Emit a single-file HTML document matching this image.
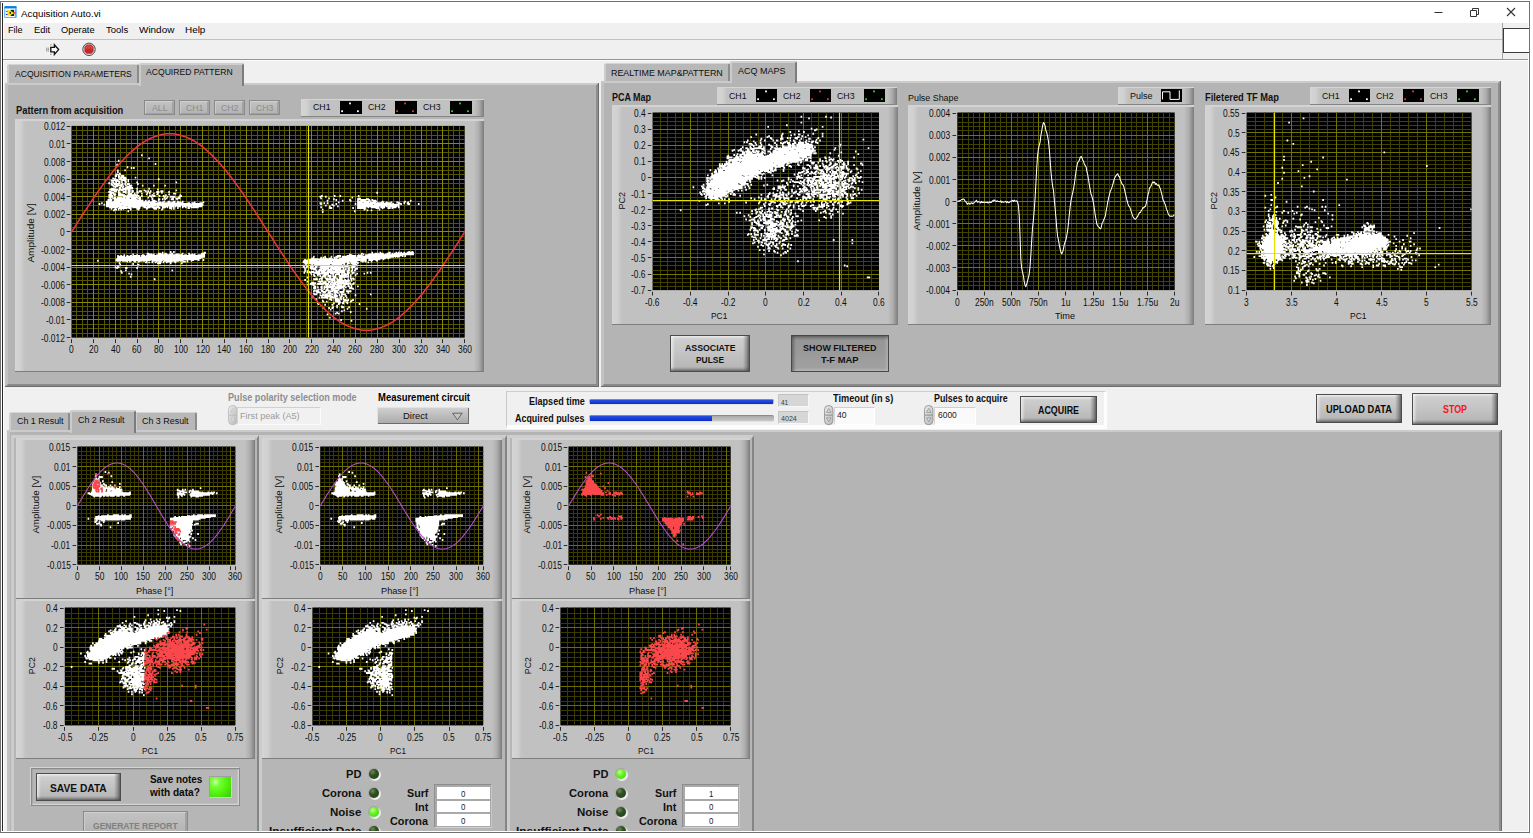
<!DOCTYPE html><html><head><meta charset="utf-8"><title>Acquisition Auto.vi</title><style>
html,body{margin:0;padding:0;background:#fff;}
body{width:1533px;height:838px;position:relative;overflow:hidden;font-family:"Liberation Sans",sans-serif;}
.a{position:absolute;box-sizing:border-box;}
.t{position:absolute;white-space:nowrap;line-height:1;transform-origin:0 50%;display:block;}
svg{position:absolute;overflow:visible;}
.page{background:#b4b4b4;}
.page::before{content:"";position:absolute;left:0;top:0;right:0;bottom:0;border-style:solid;border-width:2px 3px 3px 3px;border-color:#cbcbcb #8e8e8e #8a8a8a #c2c2c2;}
.page::after{content:"";position:absolute;left:0;top:0;right:0;bottom:0;border-right:1px solid #6c6c6c;border-bottom:1px solid #6c6c6c;}
.tab{background:#b8b8b8;border-top:1px solid #d4d4d4;border-left:2px solid #cdcdcd;border-right:2px solid #8c8c8c;border-radius:2px 2px 0 0;}
.tabsel{background:#b4b4b4;border-top:2px solid #cecece;border-left:2px solid #cbcbcb;border-right:2px solid #7c7c7c;border-radius:2px 2px 0 0;}
.frame{background:linear-gradient(90deg,#d5d5d5 0,#d0d0d0 6px,#c4c4c4 9px,#c1c1c1 11px,#c1c1c1 calc(100% - 10px),#adadad calc(100% - 5px),#7c7c7c 100%);border-top:2px solid #d3d3d3;border-bottom:1px solid #7e7e7e;}
.btn{border:1px solid #4c4c4c;background:linear-gradient(to left,rgba(70,70,70,.78) 0,rgba(80,80,80,.42) 2.5px,rgba(90,90,90,0) 6px),linear-gradient(to top,rgba(70,70,70,.72) 0,rgba(80,80,80,.3) 2px,rgba(90,90,90,0) 4px),linear-gradient(to right,rgba(255,255,255,.62) 0,rgba(255,255,255,.3) 2px,rgba(255,255,255,0) 4px),linear-gradient(to bottom,rgba(255,255,255,.6) 0,rgba(255,255,255,0) 3px),linear-gradient(180deg,#d0d0d0 0,#c5c5c5 45%,#b3b3b3 100%);}
.btnd{border:1px solid #484848;background:linear-gradient(to bottom,rgba(60,60,60,.6) 0,rgba(70,70,70,.25) 2px,rgba(80,80,80,0) 4.5px),linear-gradient(to right,rgba(60,60,60,.5) 0,rgba(80,80,80,0) 4px),linear-gradient(to left,rgba(190,190,190,.5) 0,rgba(190,190,190,0) 4px),linear-gradient(to top,rgba(200,200,200,.55) 0,rgba(200,200,200,0) 3px),linear-gradient(180deg,#949494 0,#9a9a9a 50%,#a2a2a2 100%);}
.btndis{background:linear-gradient(180deg,#c3c3c3,#b3b3b3);border:1px solid #8a8a8a;}
.btndis::before{content:"";position:absolute;left:0;top:0;right:0;bottom:0;border-style:solid;border-width:1px 2px 1.5px 1.5px;border-color:#d0d0d0 #a2a2a2 #a0a0a0 #cccccc;}
.num{background:#fff;border-top:2px solid #8e8e8e;border-left:2px solid #9a9a9a;border-right:1px solid #dcdcdc;border-bottom:1px solid #dcdcdc;}
</style></head><body>
<div class="a" style="left:0px;top:0.9px;width:1530px;height:832.1px;background:#f0f0f0;border:1px solid #727272;border-left-width:0.8px;box-shadow:inset 0 0 0 1px #fff;"></div>
<div class="a" style="left:0.8px;top:1.9px;width:1528.2px;height:21.2px;background:#fff;"></div>
<div class="a" style="left:2px;top:2.9px;width:1.1px;height:829px;background:#2a2626;"></div>
<div class="a" style="left:3.1px;top:23px;width:0.9px;height:808px;background:#fff;"></div>
<svg class="a" style="left:0px;top:0px" width="24" height="22" viewBox="0 0 24 22"><rect x="4.15" y="5.9" width="12.65" height="12.15" rx="1.2" fill="#5cb4f8"/><rect x="4.6" y="6.2" width="11.8" height="1.9" rx="0.6" fill="#0c7ae0"/><rect x="5.2" y="8.7" width="9.8" height="8.2" fill="#fff"/><rect x="10.6" y="9.8" width="3.6" height="6.2" fill="#0c2c08"/><path d="M7.4 9.1V16.8L14.4 12.95Z" fill="#ffe212"/><rect x="5.8" y="10.9" width="1.8" height="1.1" fill="#f02222"/><rect x="5.8" y="13.9" width="1.8" height="1.1" fill="#2424f0"/><rect x="14" y="12.1" width="1.6" height="1.6" fill="#e0385a"/><ellipse cx="10.3" cy="12.85" rx="0.85" ry="1.05" fill="#222"/></svg>
<span class="t" style="left:21.3px;top:9px;font-size:9.7px;color:#000;transform:scaleX(1.014);">Acquisition Auto.vi</span>
<svg class="a" style="left:1420px;top:2px" width="110" height="20" viewBox="0 0 110 20"><path d="M14.5 10.5h8" stroke="#333" stroke-width="1"/><path d="M50.5 8.5h6v6h-6zM52.5 8.5v-2h6v6h-2" stroke="#333" stroke-width="1" fill="none"/><path d="M87 6l8 8M95 6l-8 8" stroke="#333" stroke-width="1.1"/></svg>
<span class="t" style="left:8.3px;top:25px;font-size:9.7px;color:#000;transform:scaleX(0.940);">File</span>
<span class="t" style="left:33.8px;top:25px;font-size:9.7px;color:#000;transform:scaleX(0.969);">Edit</span>
<span class="t" style="left:61px;top:25px;font-size:9.7px;color:#000;transform:scaleX(0.959);">Operate</span>
<span class="t" style="left:105.8px;top:25px;font-size:9.7px;color:#000;transform:scaleX(0.980);">Tools</span>
<span class="t" style="left:138.8px;top:25px;font-size:9.7px;color:#000;transform:scaleX(1.026);">Window</span>
<span class="t" style="left:185px;top:25px;font-size:9.7px;color:#000;transform:scaleX(1.023);">Help</span>
<div class="a" style="left:3px;top:39.2px;width:1500px;height:1px;background:#c2c2c2;"></div>
<div class="a" style="left:3px;top:59px;width:1525px;height:1.1px;background:#969696;"></div>
<div class="a" style="left:3px;top:60.1px;width:1525px;height:1px;background:#fbfbfb;"></div>
<svg class="a" style="left:40px;top:40px" width="24" height="20" viewBox="40 40 24 20"><path d="M50.8 47.4h3.6v-2.7l4.2 4.9l-4.2 4.9v-2.7h-3.6z" fill="#fff" stroke="#111" stroke-width="1.35" stroke-linejoin="miter"/><path d="M46.3 48.2h3M46.3 49.6h3M46.3 51h3M50.4 44.9h1.6M50.4 54.3h1.6" stroke="#444" stroke-width="0.8" stroke-dasharray="0.9 0.6"/></svg>
<svg class="a" style="left:81px;top:41px" width="16" height="16" viewBox="0 0 16 16"><circle cx="8" cy="8.3" r="6.2" fill="#e4e4e4" stroke="#333" stroke-width="0.9"/><path d="M5.7 3.6h4.6l2.3 2.3v4.6l-2.3 2.3H5.7L3.4 10.5V5.9z" fill="#c62828"/><path d="M5.9 4.4h4.2l1.7 1.7v1.6H4.2V6.1z" fill="#d85a5a" opacity=".55"/></svg>
<div class="a" style="left:1501.6px;top:23px;width:26.4px;height:36px;background:#f0f0f0;border-left:1px solid #a4a4a4;"></div>
<div class="a" style="left:1503.2px;top:28px;width:25.8px;height:25.4px;background:#fff;border:1px solid #3c3c3c;border-right:none;"></div>
<div class="a page" style="left:5px;top:83px;width:594px;height:304px;"></div>
<div class="a tab" style="left:7px;top:63.8px;width:131.5px;height:19.2px;"></div>
<span class="t" style="left:14.7px;top:69px;font-size:9.7px;color:#0e0e0e;transform:scaleX(0.887);">ACQUISITION PARAMETERS</span>
<div class="a tabsel" style="left:138.5px;top:63px;width:105px;height:22.5px;"></div>
<span class="t" style="left:146.2px;top:67px;font-size:9.7px;color:#0e0e0e;transform:scaleX(0.888);">ACQUIRED PATTERN</span>
<span class="t" style="left:15.6px;top:106px;font-size:10px;color:#111;font-weight:bold;transform:scaleX(0.933);">Pattern from acquisition</span>
<div class="a btndis" style="left:144.2px;top:100.1px;width:30.6px;height:15px;"></div>
<span class="t" style="left:151.7px;top:103px;font-size:9.6px;color:#8c8c8c;transform:scaleX(0.913);">ALL</span>
<div class="a btndis" style="left:179px;top:100.1px;width:30.6px;height:15px;"></div>
<span class="t" style="left:185.55px;top:103px;font-size:9.6px;color:#8c8c8c;transform:scaleX(0.911);">CH1</span>
<div class="a btndis" style="left:214.2px;top:100.1px;width:30.6px;height:15px;"></div>
<span class="t" style="left:220.75px;top:103px;font-size:9.6px;color:#8c8c8c;transform:scaleX(0.911);">CH2</span>
<div class="a btndis" style="left:249.2px;top:100.1px;width:30.6px;height:15px;"></div>
<span class="t" style="left:255.75px;top:103px;font-size:9.6px;color:#8c8c8c;transform:scaleX(0.911);">CH3</span>
<div class="a frame" style="left:301px;top:98.5px;width:182.5px;height:18.3px;border-top:1px solid #d6d6d6;border-bottom:1px solid #858585;"></div>
<span class="t" style="left:313px;top:102px;font-size:9.7px;color:#0e0e0e;transform:scaleX(0.907);">CH1</span>
<div class="a" style="left:340px;top:100.6px;width:21.8px;height:13.4px;background:#000;"></div>
<svg class="a" style="left:340px;top:100.6px" width="22" height="14"><g fill="#fff"><rect x="9.1" y="1.5" width="1.8" height="1.8"/><rect x="1.2" y="9.3" width="1.8" height="1.8"/><rect x="17" y="9.3" width="1.8" height="1.8"/></g></svg>
<span class="t" style="left:368.15px;top:102px;font-size:9.7px;color:#0e0e0e;transform:scaleX(0.907);">CH2</span>
<div class="a" style="left:395.15px;top:100.6px;width:21.8px;height:13.4px;background:#000;"></div>
<svg class="a" style="left:395.15px;top:100.6px" width="22" height="14"><g fill="#e8363c"><rect x="9.1" y="1.5" width="1.8" height="1.8"/><rect x="1.2" y="9.3" width="1.8" height="1.8"/><rect x="17" y="9.3" width="1.8" height="1.8"/></g></svg>
<span class="t" style="left:423.3px;top:102px;font-size:9.7px;color:#0e0e0e;transform:scaleX(0.907);">CH3</span>
<div class="a" style="left:450.3px;top:100.6px;width:21.8px;height:13.4px;background:#000;"></div>
<svg class="a" style="left:450.3px;top:100.6px" width="22" height="14"><g fill="#22dc22"><rect x="9.1" y="1.5" width="1.8" height="1.8"/><rect x="1.2" y="9.3" width="1.8" height="1.8"/><rect x="17" y="9.3" width="1.8" height="1.8"/></g></svg>
<div class="a frame" style="left:15.4px;top:118.6px;width:468.4px;height:253px;"></div>
<svg class="a" style="left:63px;top:118px" width="410" height="228" viewBox="-8 -8 410 228"><rect x="0.5" y="-0.1" width="393.2" height="211.7" fill="#000"/><path d="M5.5 -0.1V211.6M11.5 -0.1V211.6M16.5 -0.1V211.6M27.5 -0.1V211.6M33.5 -0.1V211.6M38.5 -0.1V211.6M49.5 -0.1V211.6M55.5 -0.1V211.6M60.5 -0.1V211.6M71.5 -0.1V211.6M76.5 -0.1V211.6M82.5 -0.1V211.6M93.5 -0.1V211.6M98.5 -0.1V211.6M104.5 -0.1V211.6M115.5 -0.1V211.6M120.5 -0.1V211.6M126.5 -0.1V211.6M137.5 -0.1V211.6M142.5 -0.1V211.6M147.5 -0.1V211.6M158.5 -0.1V211.6M164.5 -0.1V211.6M169.5 -0.1V211.6M180.5 -0.1V211.6M186.5 -0.1V211.6M191.5 -0.1V211.6M202.5 -0.1V211.6M208.5 -0.1V211.6M213.5 -0.1V211.6M224.5 -0.1V211.6M229.5 -0.1V211.6M235.5 -0.1V211.6M246.5 -0.1V211.6M251.5 -0.1V211.6M257.5 -0.1V211.6M268.5 -0.1V211.6M273.5 -0.1V211.6M279.5 -0.1V211.6M289.5 -0.1V211.6M295.5 -0.1V211.6M300.5 -0.1V211.6M311.5 -0.1V211.6M317.5 -0.1V211.6M322.5 -0.1V211.6M333.5 -0.1V211.6M339.5 -0.1V211.6M344.5 -0.1V211.6M355.5 -0.1V211.6M360.5 -0.1V211.6M366.5 -0.1V211.6M377.5 -0.1V211.6M382.5 -0.1V211.6M388.5 -0.1V211.6M0.5 207.5H393.7M0.5 202.5H393.7M0.5 198.5H393.7M0.5 189.5H393.7M0.5 185.5H393.7M0.5 180.5H393.7M0.5 172.5H393.7M0.5 167.5H393.7M0.5 163.5H393.7M0.5 154.5H393.7M0.5 150.5H393.7M0.5 145.5H393.7M0.5 136.5H393.7M0.5 132.5H393.7M0.5 127.5H393.7M0.5 119.5H393.7M0.5 114.5H393.7M0.5 110.5H393.7M0.5 101.5H393.7M0.5 97.5H393.7M0.5 92.5H393.7M0.5 84.5H393.7M0.5 79.5H393.7M0.5 75.5H393.7M0.5 66.5H393.7M0.5 62.5H393.7M0.5 57.5H393.7M0.5 48.5H393.7M0.5 44.5H393.7M0.5 40.5H393.7M0.5 31.5H393.7M0.5 26.5H393.7M0.5 22.5H393.7M0.5 13.5H393.7M0.5 9.5H393.7M0.5 4.5H393.7" stroke="#565600" stroke-width="1" fill="none"/><path d="M22.5 -0.1V211.6M44.5 -0.1V211.6M66.5 -0.1V211.6M87.5 -0.1V211.6M109.5 -0.1V211.6M131.5 -0.1V211.6M153.5 -0.1V211.6M175.5 -0.1V211.6M197.5 -0.1V211.6M218.5 -0.1V211.6M240.5 -0.1V211.6M262.5 -0.1V211.6M284.5 -0.1V211.6M306.5 -0.1V211.6M328.5 -0.1V211.6M350.5 -0.1V211.6M371.5 -0.1V211.6M0.5 193.5H393.7M0.5 176.5H393.7M0.5 158.5H393.7M0.5 141.5H393.7M0.5 123.5H393.7M0.5 105.5H393.7M0.5 88.5H393.7M0.5 70.5H393.7M0.5 53.5H393.7M0.5 35.5H393.7M0.5 17.5H393.7" stroke="#8a8a00" stroke-width="1" fill="none"/><svg x="0.5" y="0.4" width="393.2" height="211.2" style="overflow:hidden"><path transform="scale(0.8) translate(0 .5)" stroke="#fff" stroke-width="1.35" fill="none" d="M87 35h2M87 36h2M96 39h2M96 40h2M58 42h2M58 43h2M104 46h2M56 47h2m46 0h2M56 48h2M69 50h2M69 51h2m3 0h2m1 0h2M74 52h2m1 0h2M57 54h2m7 0h2M57 55h2m7 0h2M57 56h2M57 57h2M59 58h2M55 59h3m1 0h3M55 60h7M54 61h3m1 0h2m2 0h4M54 62h3m1 0h3m1 0h4M58 63h10m11 0h2M51 64h2m1 0h2m2 0h2m1 0h8m10 0h2M51 65h5m3 0h4m1 0h5m39 0h2M53 66h2m1 0h2m1 0h10m1 0h2m36 0h2M49 67h10m3 0h6m2 0h2M49 68h4m1 0h7m1 0h2m2 0h3m1 0h2M51 69h2m2 0h2m1 0h3m1 0h2m2 0h3m1 0h2m9 0h2m47 0h2M46 70h2m1 0h5m1 0h2m2 0h2m1 0h2m3 0h2m12 0h2m47 0h2M46 71h2m1 0h2m1 0h9m2 0h2m1 0h2m1 0h4m9 0h2M49 72h3m1 0h7m1 0h4m1 0h2m1 0h4m9 0h2M49 73h4m1 0h11m2 0h2m3 0h4m12 0h2m12 0h2m12 0h2M51 74h3m1 0h8m1 0h2m1 0h9m12 0h2m12 0h2m12 0h2M52 75h6m3 0h5m3 0h6M54 76h2m3 0h3m1 0h2m2 0h10M49 77h5m5 0h3m2 0h13m4 0h2m13 0h2M47 78h11m1 0h15m7 0h2m13 0h2m9 0h2M47 79h22m1 0h4m1 0h2m13 0h2m15 0h2m21 0h2M49 80h8m1 0h3m1 0h3m2 0h2m1 0h4m1 0h3m3 0h2m1 0h4m2 0h4m1 0h2m1 0h2m11 0h4m15 0h2M46 81h4m3 0h4m1 0h2m4 0h5m1 0h4m1 0h3m3 0h2m1 0h4m4 0h2m1 0h2m1 0h2m6 0h4m1 0h4m6 0h2M46 82h7m5 0h3m3 0h5m1 0h3m2 0h2m4 0h3m10 0h2m1 0h2m7 0h4m2 0h2m7 0h2m258 0h2M48 83h6m4 0h4m5 0h2m1 0h6m2 0h2m1 0h3m3 0h2m5 0h2m1 0h2m3 0h2m3 0h2m3 0h2m13 0h4m250 0h2M47 84h4m1 0h4m2 0h7m5 0h6m2 0h2m7 0h2m4 0h2m2 0h2m3 0h2m2 0h3m12 0h2m4 0h4M46 85h5m1 0h4m2 0h9m3 0h13m10 0h2m5 0h2m4 0h2m9 0h2m2 0h2m12 0h2M46 86h6m1 0h2m3 0h10m1 0h16m2 0h2m8 0h2m1 0h5m4 0h2m3 0h2m1 0h2m16 0h3m174 0h2m14 0h2m5 0h2m21 0h2M47 87h5m12 0h15m1 0h2m1 0h2m2 0h2m8 0h4m1 0h3m4 0h2m3 0h4m1 0h2m2 0h7m4 0h4m172 0h4m3 0h2m9 0h2m5 0h2m21 0h2M46 88h6m1 0h3m1 0h6m1 0h19m1 0h3m8 0h2m2 0h2m14 0h3m1 0h2m2 0h7m3 0h3m174 0h2m5 0h2m31 0h2M46 89h4m1 0h5m1 0h10m1 0h5m1 0h13m8 0h2m3 0h2m13 0h2m1 0h2m6 0h2m2 0h6m175 0h2m8 0h2m27 0h2m6 0h3M48 90h2m1 0h22m1 0h7m2 0h4m13 0h2m6 0h3m2 0h2m1 0h4m4 0h4m2 0h6m175 0h2m8 0h2m4 0h2m28 0h5m6 0h4M45 91h6m2 0h29m2 0h3m13 0h2m6 0h3m2 0h2m1 0h2m6 0h4m3 0h2m194 0h2m1 0h2m15 0h2m8 0h16m2 0h2M45 92h6m2 0h37m2 0h2m2 0h2m3 0h4m3 0h2m209 0h2m9 0h2m6 0h2m7 0h3m7 0h2m2 0h7m3 0h3m1 0h6m42 0h2M43 93h8m1 0h38m1 0h3m1 0h3m2 0h7m8 0h2m3 0h3m4 0h3m2 0h2m4 0h2m179 0h2m17 0h2m8 0h2m7 0h17m3 0h5m6 0h2m26 0h2m5 0h2M43 94h64m1 0h4m1 0h4m3 0h4m1 0h5m2 0h5m1 0h2m13 0h2m9 0h2m167 0h2m22 0h25m5 0h4m2 0h2m4 0h2m5 0h3m6 0h3m2 0h2M37 95h2m4 0h18m1 0h43m2 0h9m1 0h13m1 0h9m5 0h3m2 0h5m5 0h6m144 0h3m2 0h2m2 0h2m12 0h2m22 0h7m1 0h7m1 0h8m1 0h9m1 0h9m5 0h5m4 0h2m2 0h3M34 96h2m1 0h2m4 0h54m1 0h51m1 0h14m146 0h3m2 0h2m2 0h2m9 0h2m22 0h2m1 0h43m1 0h2m5 0h5m2 0h2m2 0h4m10 0h2M34 97h2m4 0h2m1 0h122m146 0h2m12 0h2m3 0h2m22 0h2m1 0h20m1 0h32m1 0h2m7 0h3m10 0h2M40 98h2m1 0h20m1 0h101m152 0h2m6 0h4m28 0h53M43 99h63m1 0h3m1 0h17m1 0h8m1 0h13m1 0h12m153 0h2m3 0h2m3 0h2m3 0h2m23 0h38m1 0h14M43 100h26m1 0h17m2 0h4m1 0h10m1 0h5m3 0h8m1 0h9m1 0h5m1 0h6m1 0h18m148 0h2m9 0h2m8 0h2m23 0h28m1 0h6m1 0h14m1 0h2M47 101h11m1 0h16m1 0h10m4 0h9m1 0h11m2 0h5m1 0h2m1 0h4m1 0h2m3 0h2m4 0h2m2 0h2m1 0h3m1 0h10m152 0h2m9 0h4m25 0h2m4 0h11m2 0h2m2 0h11m1 0h6m3 0h4m1 0h6m2 0h2M49 102h2m3 0h2m2 0h12m1 0h4m6 0h5m7 0h3m6 0h5m2 0h2m2 0h2m7 0h4m1 0h2m3 0h2m11 0h3m174 0h4m25 0h2m4 0h11m12 0h5m3 0h2m5 0h4m1 0h2M49 103h2m2 0h4m1 0h2m1 0h2m1 0h2m7 0h2m6 0h4m8 0h2m8 0h4m5 0h3m9 0h2m1 0h2m184 0h2m50 0h3m16 0h2M52 104h5m1 0h2m1 0h2m10 0h2m8 0h2m27 0h2m199 0h2m50 0h2m2 0h2m3 0h2m8 0h2M52 105h2m16 0h2m281 0h2m14 0h2m3 0h2M70 106h2m241 0h2m38 0h2M313 107h2M123 156h2m2 0h2m292 0h2m2 0h2M113 157h2m8 0h2m2 0h2m36 0h3m207 0h2m8 0h2m9 0h3m6 0h2m1 0h2m1 0h2m2 0h2m2 0h9M94 158h3m11 0h4m1 0h2m1 0h3m5 0h3m11 0h2m6 0h2m14 0h6m194 0h2m11 0h2m2 0h5m1 0h5m4 0h5m1 0h2m1 0h25M76 159h2m16 0h7m1 0h2m4 0h7m1 0h4m2 0h5m3 0h5m2 0h3m6 0h2m2 0h2m1 0h2m7 0h5m180 0h2m13 0h4m5 0h20m1 0h7m1 0h28M65 160h2m9 0h2m3 0h2m5 0h3m3 0h10m2 0h33m2 0h3m2 0h9m3 0h9m180 0h4m7 0h2m1 0h2m1 0h2m1 0h61M57 161h2m2 0h2m2 0h2m2 0h2m2 0h3m1 0h9m1 0h5m1 0h74m165 0h5m7 0h12m1 0h7m3 0h48m1 0h2M57 162h10m1 0h18m1 0h80m135 0h2m12 0h2m6 0h2m4 0h7m1 0h18m1 0h54m2 0h2m1 0h2M57 163h110m135 0h2m7 0h2m1 0h4m6 0h2m2 0h7m3 0h65m1 0h2m1 0h2M57 164h107m136 0h3m8 0h2m1 0h2m1 0h2m3 0h3m3 0h2m1 0h2m2 0h64M56 165h106m137 0h10m1 0h17m1 0h4m2 0h26m1 0h9m1 0h22m2 0h2M55 166h105m4 0h2m125 0h2m2 0h74m2 0h15m3 0h2M32 167h2m21 0h44m1 0h14m1 0h25m4 0h2m3 0h4m5 0h2m4 0h2m124 0h18m1 0h60m2 0h6m3 0h3M32 168h2m22 0h6m1 0h8m1 0h3m2 0h4m2 0h5m1 0h3m1 0h2m5 0h4m1 0h8m1 0h21m1 0h7m1 0h2m3 0h2m138 0h37m1 0h30m4 0h8m5 0h2m5 0h2M69 169h2m1 0h2m4 0h3m2 0h2m7 0h3m1 0h2m2 0h2m2 0h3m2 0h4m1 0h2m2 0h8m2 0h3m8 0h4m1 0h2m143 0h58m1 0h11m4 0h2m2 0h2m1 0h2m2 0h2M59 170h2m31 0h3m1 0h2m2 0h2m2 0h2m1 0h5m2 0h2m2 0h2m3 0h2m4 0h2m6 0h2m150 0h54m1 0h4m1 0h10m11 0h2M59 171h2m15 0h2m29 0h5m11 0h2m12 0h2m152 0h51m2 0h4m1 0h7m1 0h2M60 172h2m14 0h2m4 0h3m207 0h2m6 0h2m1 0h20m2 0h13m2 0h2m2 0h2m5 0h6M60 173h2m20 0h3m204 0h2m1 0h3m3 0h2m6 0h18m1 0h12m1 0h8m4 0h2m1 0h5M57 174h2m23 0h2m205 0h2m2 0h4m1 0h2m1 0h2m1 0h5m2 0h23m1 0h2m1 0h8m4 0h5m1 0h2M54 175h2m1 0h3m229 0h3m1 0h4m1 0h5m1 0h3m3 0h17m1 0h12m1 0h7m1 0h6M54 176h6m7 0h3m11 0h2m207 0h2m1 0h2m3 0h4m2 0h3m3 0h12m2 0h17m5 0h2m1 0h5M56 177h2m9 0h3m11 0h2m208 0h2m5 0h8m5 0h11m1 0h14m2 0h2m1 0h2m1 0h3m2 0h2m2 0h4M291 178h2m6 0h7m3 0h4m1 0h23m2 0h2m1 0h2m1 0h3m2 0h2m2 0h4M67 179h2m56 0h2m164 0h2m9 0h5m2 0h10m1 0h6m1 0h17m1 0h3m2 0h2m1 0h3M61 180h2m4 0h2m56 0h2m164 0h2m1 0h2m9 0h2m1 0h10m1 0h8m2 0h13m2 0h4m1 0h3m1 0h2M61 181h2m228 0h2m1 0h4m1 0h4m2 0h6m1 0h5m2 0h23m2 0h3m2 0h2M62 182h2m226 0h2m2 0h17m1 0h30m2 0h4m2 0h4m15 0h2m2 0h2M62 183h2m7 0h2m217 0h2m3 0h2m1 0h2m3 0h19m1 0h6m2 0h5m1 0h6m1 0h4m2 0h4m2 0h2m7 0h2m2 0h2m2 0h2M71 184h2m1 0h2m223 0h2m1 0h2m2 0h16m1 0h5m1 0h7m1 0h2m1 0h7m3 0h2m4 0h2m7 0h2M74 185h2m223 0h2m1 0h2m3 0h4m4 0h7m4 0h2m1 0h7m1 0h10m1 0h2m4 0h2M302 186h3m2 0h2m1 0h2m2 0h5m1 0h5m1 0h2m1 0h2m3 0h10m1 0h2m1 0h2m4 0h2M73 187h2m228 0h2m5 0h2m1 0h5m2 0h5m1 0h5m3 0h13m1 0h2M73 188h2m219 0h2m16 0h3m1 0h2m4 0h3m2 0h4m3 0h13m1 0h2M294 189h2m9 0h2m4 0h4m1 0h5m1 0h2m2 0h7m1 0h5m1 0h2m6 0h2m1 0h2M103 190h2m197 0h6m1 0h5m3 0h13m1 0h2m1 0h5m6 0h2m1 0h6M103 191h2m186 0h2m9 0h6m1 0h2m1 0h2m4 0h12m1 0h8m2 0h2m2 0h2m2 0h2m1 0h2M291 192h2m19 0h2m5 0h2m3 0h6m2 0h16m1 0h2M294 193h2m12 0h7m1 0h3m1 0h4m1 0h2m1 0h2m1 0h17m1 0h2M294 194h2m5 0h2m5 0h11m1 0h7m1 0h13m1 0h5M299 195h7m4 0h2m2 0h5m2 0h2m1 0h21m1 0h3m3 0h2M298 196h8m1 0h15m1 0h2m1 0h5m1 0h18m1 0h3M295 197h2m1 0h6m3 0h8m2 0h5m1 0h12m1 0h2m2 0h7m1 0h2m1 0h2M295 198h2m4 0h3m13 0h4m1 0h2m1 0h5m1 0h7m1 0h4m2 0h2m2 0h2M302 199h4m6 0h2m1 0h2m1 0h12m1 0h11m3 0h3m1 0h2m6 0h2M303 200h3m1 0h2m2 0h3m1 0h29m1 0h3m1 0h2m6 0h2M302 201h4m1 0h2m2 0h3m1 0h13m1 0h12m1 0h2m3 0h4M302 202h4m6 0h2m1 0h2m2 0h2m3 0h14m1 0h2m6 0h6M308 203h2m1 0h2m2 0h2m1 0h3m3 0h6m3 0h2m5 0h2m9 0h2M303 204h2m1 0h4m1 0h4m3 0h4m3 0h10m4 0h3M302 205h7m3 0h3m2 0h17m5 0h2m2 0h7M302 206h2m1 0h5m2 0h7m2 0h6m1 0h5m2 0h6m2 0h7M306 207h6m2 0h4m2 0h4m4 0h6m1 0h6m4 0h2M302 208h2m2 0h2m2 0h2m3 0h2m3 0h5m3 0h3m1 0h2m3 0h2m6 0h2M302 209h5m6 0h2m2 0h10m2 0h2m3 0h2m1 0h6m30 0h2M303 210h4m3 0h2m1 0h8m1 0h2m1 0h2m1 0h4m2 0h2m1 0h6m11 0h2m17 0h2M310 211h15m3 0h5m1 0h2m1 0h2m3 0h2m10 0h2M301 212h2m9 0h2m2 0h11m1 0h5m3 0h3m3 0h2M301 213h2m6 0h2m1 0h9m1 0h9m4 0h3m1 0h2m2 0h2M309 214h2m1 0h9m2 0h11m1 0h3m1 0h2m2 0h2M304 215h3m12 0h2m1 0h3m4 0h5m1 0h3m1 0h2M304 216h3m15 0h4m3 0h6m1 0h2m1 0h5m1 0h2m4 0h2M313 217h2m9 0h2m3 0h7m4 0h7m2 0h4M313 218h3m2 0h2m9 0h7m3 0h4m1 0h2m2 0h3M314 219h2m2 0h2m10 0h7m2 0h2m2 0h2m3 0h2M307 220h2m18 0h2m4 0h4m1 0h3m2 0h3M307 221h3m17 0h2m4 0h3m2 0h3m3 0h2m13 0h2M308 222h2m6 0h2m7 0h2m6 0h2m24 0h2M316 223h2m7 0h2m4 0h2M331 224h2m4 0h2M326 225h2m3 0h2m4 0h4m5 0h2M314 226h2m5 0h2m2 0h3m3 0h2m4 0h4m5 0h2M314 227h2m5 0h2m2 0h2m17 0h2m22 0h2M323 228h2m19 0h2m22 0h2M323 229h2m15 0h2M337 230h2m1 0h2M337 231h2m9 0h2M331 232h2m15 0h2M329 233h6M319 234h2m8 0h2m2 0h2M319 235h2M322 238h2M322 239h2M336 241h2M336 242h2m11 0h2M349 243h2"/><path d="M0.0 105.6 3.3 100.5 6.6 95.3 9.8 90.2 13.1 85.2 16.4 80.2 19.7 75.2 22.9 70.4 26.2 65.6 29.5 61.0 32.8 56.5 36.0 52.1 39.3 47.8 42.6 43.7 45.9 39.8 49.1 36.1 52.4 32.6 55.7 29.2 59.0 26.1 62.3 23.2 65.5 20.5 68.8 18.0 72.1 15.8 75.4 13.8 78.6 12.1 81.9 10.7 85.2 9.5 88.5 8.5 91.7 7.8 95.0 7.4 98.3 7.3 101.6 7.4 104.9 7.8 108.1 8.5 111.4 9.5 114.7 10.7 118.0 12.1 121.2 13.8 124.5 15.8 127.8 18.0 131.1 20.5 134.3 23.2 137.6 26.1 140.9 29.2 144.2 32.6 147.4 36.1 150.7 39.8 154.0 43.7 157.3 47.8 160.6 52.1 163.8 56.5 167.1 61.0 170.4 65.6 173.7 70.4 176.9 75.2 180.2 80.2 183.5 85.2 186.8 90.2 190.0 95.3 193.3 100.5 196.6 105.6 199.9 110.7 203.2 115.9 206.4 121.0 209.7 126.0 213.0 131.0 216.3 136.0 219.5 140.8 222.8 145.6 226.1 150.2 229.4 154.7 232.6 159.1 235.9 163.4 239.2 167.5 242.5 171.4 245.8 175.1 249.0 178.6 252.3 182.0 255.6 185.1 258.9 188.0 262.1 190.7 265.4 193.2 268.7 195.4 272.0 197.4 275.2 199.1 278.5 200.5 281.8 201.7 285.1 202.7 288.3 203.4 291.6 203.8 294.9 203.9 298.2 203.8 301.5 203.4 304.7 202.7 308.0 201.7 311.3 200.5 314.6 199.1 317.8 197.4 321.1 195.4 324.4 193.2 327.7 190.7 330.9 188.0 334.2 185.1 337.5 182.0 340.8 178.6 344.1 175.1 347.3 171.4 350.6 167.5 353.9 163.4 357.2 159.1 360.4 154.7 363.7 150.2 367.0 145.6 370.3 140.8 373.5 136.0 376.8 131.0 380.1 126.0 383.4 121.0 386.6 115.9 389.9 110.7 393.2 105.6" stroke="#ea343e" stroke-width="1.55" fill="none"/></svg><path d="M237.5 -0.1V211.6M0.5 139.5H393.7" stroke="#e4e400" stroke-width="1.15" fill="none"/><path d="M0.5 213.2v3.8M22.5 213.2v3.8M44.5 213.2v3.8M66.5 213.2v3.8M87.5 213.2v3.8M109.5 213.2v3.8M131.5 213.2v3.8M153.5 213.2v3.8M175.5 213.2v3.8M197.5 213.2v3.8M218.5 213.2v3.8M240.5 213.2v3.8M262.5 213.2v3.8M284.5 213.2v3.8M306.5 213.2v3.8M328.5 213.2v3.8M350.5 213.2v3.8M371.5 213.2v3.8M393.5 213.2v3.8M-0.7 211.5h-3.6M-0.7 193.5h-3.6M-0.7 176.5h-3.6M-0.7 158.5h-3.6M-0.7 141.5h-3.6M-0.7 123.5h-3.6M-0.7 105.5h-3.6M-0.7 88.5h-3.6M-0.7 70.5h-3.6M-0.7 53.5h-3.6M-0.7 35.5h-3.6M-0.7 17.5h-3.6M-0.7 0.5h-3.6" stroke="#2a2a2a" stroke-width="1" fill="none"/></svg>
<span class="t" style="left:41.11px;top:334px;font-size:10.4px;color:#0e0e0e;transform:scaleX(0.810);">-0.012</span>
<span class="t" style="left:45.8px;top:316px;font-size:10.4px;color:#0e0e0e;transform:scaleX(0.810);">-0.01</span>
<span class="t" style="left:41.11px;top:298px;font-size:10.4px;color:#0e0e0e;transform:scaleX(0.810);">-0.008</span>
<span class="t" style="left:41.11px;top:281px;font-size:10.4px;color:#0e0e0e;transform:scaleX(0.810);">-0.006</span>
<span class="t" style="left:41.11px;top:263px;font-size:10.4px;color:#0e0e0e;transform:scaleX(0.810);">-0.004</span>
<span class="t" style="left:41.11px;top:246px;font-size:10.4px;color:#0e0e0e;transform:scaleX(0.810);">-0.002</span>
<span class="t" style="left:60.31px;top:228px;font-size:10.4px;color:#0e0e0e;transform:scaleX(0.810);">0</span>
<span class="t" style="left:43.92px;top:210px;font-size:10.4px;color:#0e0e0e;transform:scaleX(0.810);">0.002</span>
<span class="t" style="left:43.92px;top:193px;font-size:10.4px;color:#0e0e0e;transform:scaleX(0.810);">0.004</span>
<span class="t" style="left:43.92px;top:175px;font-size:10.4px;color:#0e0e0e;transform:scaleX(0.810);">0.006</span>
<span class="t" style="left:43.92px;top:158px;font-size:10.4px;color:#0e0e0e;transform:scaleX(0.810);">0.008</span>
<span class="t" style="left:48.6px;top:140px;font-size:10.4px;color:#0e0e0e;transform:scaleX(0.810);">0.01</span>
<span class="t" style="left:43.92px;top:122px;font-size:10.4px;color:#0e0e0e;transform:scaleX(0.810);">0.012</span>
<span class="t" style="left:69.16px;top:345px;font-size:10.4px;color:#0e0e0e;transform:scaleX(0.810);">0</span>
<span class="t" style="left:88.66px;top:345px;font-size:10.4px;color:#0e0e0e;transform:scaleX(0.810);">20</span>
<span class="t" style="left:110.5px;top:345px;font-size:10.4px;color:#0e0e0e;transform:scaleX(0.810);">40</span>
<span class="t" style="left:132.35px;top:345px;font-size:10.4px;color:#0e0e0e;transform:scaleX(0.810);">60</span>
<span class="t" style="left:154.19px;top:345px;font-size:10.4px;color:#0e0e0e;transform:scaleX(0.810);">80</span>
<span class="t" style="left:173.69px;top:345px;font-size:10.4px;color:#0e0e0e;transform:scaleX(0.810);">100</span>
<span class="t" style="left:195.54px;top:345px;font-size:10.4px;color:#0e0e0e;transform:scaleX(0.810);">120</span>
<span class="t" style="left:217.38px;top:345px;font-size:10.4px;color:#0e0e0e;transform:scaleX(0.810);">140</span>
<span class="t" style="left:239.23px;top:345px;font-size:10.4px;color:#0e0e0e;transform:scaleX(0.810);">160</span>
<span class="t" style="left:261.07px;top:345px;font-size:10.4px;color:#0e0e0e;transform:scaleX(0.810);">180</span>
<span class="t" style="left:282.92px;top:345px;font-size:10.4px;color:#0e0e0e;transform:scaleX(0.810);">200</span>
<span class="t" style="left:304.76px;top:345px;font-size:10.4px;color:#0e0e0e;transform:scaleX(0.810);">220</span>
<span class="t" style="left:326.61px;top:345px;font-size:10.4px;color:#0e0e0e;transform:scaleX(0.810);">240</span>
<span class="t" style="left:348.45px;top:345px;font-size:10.4px;color:#0e0e0e;transform:scaleX(0.810);">260</span>
<span class="t" style="left:370.29px;top:345px;font-size:10.4px;color:#0e0e0e;transform:scaleX(0.810);">280</span>
<span class="t" style="left:392.14px;top:345px;font-size:10.4px;color:#0e0e0e;transform:scaleX(0.810);">300</span>
<span class="t" style="left:413.98px;top:345px;font-size:10.4px;color:#0e0e0e;transform:scaleX(0.810);">320</span>
<span class="t" style="left:435.83px;top:345px;font-size:10.4px;color:#0e0e0e;transform:scaleX(0.810);">340</span>
<span class="t" style="left:457.67px;top:345px;font-size:10.4px;color:#0e0e0e;transform:scaleX(0.810);">360</span>
<span class="t" style="left:1.76px;top:227.65px;font-size:9.7px;color:#0e0e0e;transform-origin:50% 50%;transform:rotate(-90deg) scaleX(1.031);">Amplitude [V]</span>
<div class="a page" style="left:601px;top:81px;width:900px;height:306px;"></div>
<div class="a tab" style="left:603.5px;top:62.8px;width:126.5px;height:18.2px;"></div>
<span class="t" style="left:610.8px;top:68px;font-size:9.7px;color:#0e0e0e;transform:scaleX(0.919);">REALTIME MAP&amp;PATTERN</span>
<div class="a tabsel" style="left:730px;top:60.8px;width:67px;height:22.7px;"></div>
<span class="t" style="left:737.6px;top:66px;font-size:9.7px;color:#0e0e0e;transform:scaleX(0.930);">ACQ MAPS</span>
<span class="t" style="left:611.6px;top:93px;font-size:10px;color:#111;font-weight:bold;transform:scaleX(0.896);">PCA Map</span>
<div class="a frame" style="left:716.6px;top:86.8px;width:180.8px;height:18px;border-top:1px solid #d6d6d6;border-bottom:1px solid #858585;"></div>
<span class="t" style="left:728.6px;top:91px;font-size:9.7px;color:#0e0e0e;transform:scaleX(0.907);">CH1</span>
<div class="a" style="left:755.6px;top:88.9px;width:21.3px;height:13.4px;background:#000;"></div>
<svg class="a" style="left:755.6px;top:88.9px" width="22" height="14"><g fill="#fff"><rect x="9.1" y="1.5" width="1.8" height="1.8"/><rect x="1.2" y="9.3" width="1.8" height="1.8"/><rect x="17" y="9.3" width="1.8" height="1.8"/></g></svg>
<span class="t" style="left:782.8px;top:91px;font-size:9.7px;color:#0e0e0e;transform:scaleX(0.907);">CH2</span>
<div class="a" style="left:809.8px;top:88.9px;width:21.3px;height:13.4px;background:#000;"></div>
<svg class="a" style="left:809.8px;top:88.9px" width="22" height="14"><g fill="#e8363c"><rect x="9.1" y="1.5" width="1.8" height="1.8"/><rect x="1.2" y="9.3" width="1.8" height="1.8"/><rect x="17" y="9.3" width="1.8" height="1.8"/></g></svg>
<span class="t" style="left:837px;top:91px;font-size:9.7px;color:#0e0e0e;transform:scaleX(0.907);">CH3</span>
<div class="a" style="left:864px;top:88.9px;width:21.3px;height:13.4px;background:#000;"></div>
<svg class="a" style="left:864px;top:88.9px" width="22" height="14"><g fill="#22dc22"><rect x="9.1" y="1.5" width="1.8" height="1.8"/><rect x="1.2" y="9.3" width="1.8" height="1.8"/><rect x="17" y="9.3" width="1.8" height="1.8"/></g></svg>
<div class="a frame" style="left:611.6px;top:105.4px;width:286.2px;height:219.5px;"></div>
<svg class="a" style="left:644px;top:105px" width="244" height="194" viewBox="-8 -8 244 194"><rect x="0.6" y="-0.5" width="226.4" height="177.6" fill="#000"/><path d="M8.5 -0.5V177.1M15.5 -0.5V177.1M23.5 -0.5V177.1M30.5 -0.5V177.1M45.5 -0.5V177.1M53.5 -0.5V177.1M60.5 -0.5V177.1M68.5 -0.5V177.1M83.5 -0.5V177.1M91.5 -0.5V177.1M98.5 -0.5V177.1M106.5 -0.5V177.1M121.5 -0.5V177.1M128.5 -0.5V177.1M136.5 -0.5V177.1M143.5 -0.5V177.1M159.5 -0.5V177.1M166.5 -0.5V177.1M174.5 -0.5V177.1M181.5 -0.5V177.1M196.5 -0.5V177.1M204.5 -0.5V177.1M211.5 -0.5V177.1M219.5 -0.5V177.1M0.6 173.5H227M0.6 169.5H227M0.6 165.5H227M0.6 157.5H227M0.6 152.5H227M0.6 148.5H227M0.6 140.5H227M0.6 136.5H227M0.6 132.5H227M0.6 124.5H227M0.6 120.5H227M0.6 116.5H227M0.6 108.5H227M0.6 104.5H227M0.6 100.5H227M0.6 92.5H227M0.6 88.5H227M0.6 84.5H227M0.6 76.5H227M0.6 72.5H227M0.6 68.5H227M0.6 60.5H227M0.6 56.5H227M0.6 52.5H227M0.6 44.5H227M0.6 40.5H227M0.6 36.5H227M0.6 28.5H227M0.6 24.5H227M0.6 20.5H227M0.6 12.5H227M0.6 8.5H227M0.6 4.5H227" stroke="#414100" stroke-width="1" fill="none"/><path d="M38.5 -0.5V177.1M76.5 -0.5V177.1M113.5 -0.5V177.1M151.5 -0.5V177.1M189.5 -0.5V177.1M0.6 161.5H227M0.6 144.5H227M0.6 128.5H227M0.6 112.5H227M0.6 96.5H227M0.6 80.5H227M0.6 64.5H227M0.6 48.5H227M0.6 32.5H227M0.6 16.5H227" stroke="#747400" stroke-width="1" fill="none"/><svg x="0.6" y="0.3" width="226.4" height="176.8" style="overflow:hidden"><path transform="scale(0.85) translate(0 .5)" stroke="#fff" stroke-width="1.27" fill="none" d="M174 3h2m27 0h2M174 4h2m27 0h2m4 0h2M183 5h2m24 0h2M183 6h2M174 10h2M174 11h2M157 13h2M157 14h2M135 15h2m62 0h2M135 16h2m62 0h2M186 17h2M186 18h2m4 0h2M190 19h4M171 20h2m17 0h2M161 21h2m8 0h2m4 0h2M161 22h2m14 0h2M152 23h2m34 0h2m9 0h2M121 24h2m29 0h2m12 0h2m3 0h3m14 0h2m9 0h2M121 25h2m28 0h2m9 0h2m2 0h2m3 0h3m8 0h2M136 26h2m13 0h2m9 0h2m11 0h2m5 0h2m15 0h2M115 27h2m17 0h4m13 0h2m17 0h3m2 0h2m2 0h2m18 0h2M115 28h2m17 0h2m2 0h2m11 0h2m5 0h2m1 0h2m4 0h6m6 0h2m13 0h2M127 29h2m9 0h3m9 0h4m4 0h2m1 0h2m4 0h4m3 0h2m7 0h3m8 0h2M127 30h2m10 0h2m9 0h4m15 0h2m3 0h2m7 0h3m6 0h2m53 0h2M111 31h2m13 0h2m3 0h2m8 0h2m2 0h3m2 0h2m9 0h2m2 0h2m5 0h2m6 0h2m10 0h2m2 0h2m49 0h2M111 32h2m5 0h2m6 0h2m3 0h2m8 0h2m2 0h3m9 0h2m2 0h2m2 0h3m4 0h2m6 0h2m1 0h2m2 0h3m1 0h2m3 0h2M107 33h2m1 0h2m6 0h2m35 0h4m7 0h2m5 0h2m4 0h2m2 0h2m1 0h4m1 0h2M107 34h2m1 0h2m8 0h2m4 0h2m15 0h2m5 0h2m1 0h4m1 0h4m4 0h3m2 0h7m1 0h3m4 0h3m2 0h4M113 35h4m3 0h2m4 0h2m15 0h2m5 0h5m3 0h4m2 0h5m2 0h7m2 0h4m9 0h2M113 36h5m3 0h2m4 0h2m7 0h2m7 0h2m5 0h2m5 0h4m1 0h3m2 0h19m32 0h2M116 37h4m1 0h2m4 0h2m7 0h4m5 0h2m5 0h2m5 0h9m1 0h20m31 0h2M114 38h2m2 0h2m5 0h4m9 0h3m4 0h2m5 0h3m4 0h9m2 0h19m30 0h2M105 39h2m7 0h2m2 0h2m4 0h5m1 0h2m7 0h3m3 0h2m5 0h11m1 0h25m1 0h2m27 0h2M105 40h2m2 0h3m2 0h3m3 0h8m2 0h2m7 0h3m1 0h2m1 0h2m1 0h2m1 0h37m1 0h2m22 0h2m37 0h2M103 41h2m4 0h4m1 0h18m6 0h2m3 0h36m1 0h6m1 0h3m24 0h2m37 0h2M95 42h2m5 0h3m6 0h3m1 0h5m8 0h4m6 0h2m4 0h23m1 0h18m1 0h3m23 0h2M93 43h4m3 0h5m6 0h3m3 0h3m1 0h2m7 0h3m9 0h4m1 0h14m1 0h30m21 0h2M93 44h2m5 0h2m1 0h4m2 0h6m2 0h3m1 0h5m2 0h2m1 0h2m2 0h4m2 0h51m46 0h2M105 45h21m2 0h3m4 0h4m2 0h48m32 0h2m15 0h2M105 46h4m1 0h7m1 0h4m1 0h2m2 0h6m5 0h2m1 0h30m1 0h16m1 0h4m15 0h2m11 0h2M99 47h2m4 0h4m1 0h8m3 0h9m1 0h2m5 0h50m1 0h4m15 0h2m31 0h2M95 48h2m2 0h2m1 0h28m7 0h18m1 0h31m54 0h2M88 49h2m5 0h2m1 0h2m2 0h3m2 0h24m3 0h53m31 0h2M87 50h3m8 0h3m1 0h4m1 0h16m1 0h58m3 0h2m31 0h2M87 51h7m3 0h85m1 0h4m15 0h2m3 0h2m27 0h2M87 52h7m1 0h7m1 0h70m2 0h12m15 0h3m2 0h2m27 0h2M87 53h3m5 0h9m1 0h70m1 0h2m3 0h2m2 0h2m9 0h2m5 0h2m4 0h2m1 0h2M90 54h88m1 0h4m13 0h2m9 0h7m6 0h2M89 55h87m3 0h4m2 0h2m9 0h2m1 0h2m2 0h2m2 0h2m2 0h2m4 0h7M86 56h2m1 0h3m1 0h7m2 0h2m1 0h67m2 0h2m9 0h2m9 0h2m1 0h2m2 0h3m11 0h7m5 0h2M86 57h2m1 0h2m2 0h10m1 0h56m1 0h11m1 0h3m10 0h5m3 0h2m8 0h2m2 0h2m8 0h4m2 0h2m3 0h2M86 58h6m1 0h49m1 0h21m9 0h2m11 0h5m3 0h2m3 0h2m7 0h3m3 0h2m8 0h2m3 0h2m13 0h3M78 59h2m1 0h2m1 0h72m2 0h3m9 0h2m15 0h3m9 0h2m7 0h3m3 0h4m5 0h4m2 0h2m13 0h3M78 60h2m1 0h2m1 0h71m2 0h2m11 0h3m8 0h3m7 0h3m6 0h2m5 0h3m3 0h5m5 0h4m2 0h2m5 0h2m8 0h2M78 61h9m1 0h58m1 0h8m2 0h2m1 0h3m8 0h2m8 0h5m5 0h3m2 0h2m2 0h2m1 0h2m2 0h2m3 0h4m8 0h2m1 0h2m7 0h2m8 0h2M78 62h8m1 0h68m5 0h4m20 0h2m5 0h4m1 0h2m2 0h7m3 0h4m2 0h2m2 0h6m1 0h2M78 63h2m1 0h61m1 0h8m2 0h3m6 0h2m12 0h2m7 0h2m2 0h6m6 0h6m1 0h5m1 0h12m1 0h2M76 64h2m1 0h2m1 0h60m2 0h2m8 0h2m20 0h4m5 0h2m2 0h6m6 0h2m1 0h9m1 0h3m1 0h2m1 0h5m1 0h3m9 0h2M76 65h66m1 0h2m8 0h2m21 0h4m2 0h2m6 0h6m7 0h6m9 0h2m1 0h4m3 0h4m7 0h3M67 66h2m4 0h2m2 0h60m1 0h4m1 0h3m7 0h2m25 0h4m10 0h7m2 0h6m1 0h2m4 0h4m1 0h2m6 0h3m8 0h2M67 67h2m4 0h3m1 0h6m2 0h40m1 0h11m1 0h8m7 0h2m22 0h2m1 0h3m9 0h2m2 0h5m3 0h3m3 0h3m3 0h4m1 0h2m6 0h2m2 0h2m9 0h2M72 68h4m1 0h53m1 0h8m1 0h3m10 0h2m20 0h4m2 0h3m2 0h2m3 0h3m4 0h4m2 0h2m2 0h2m1 0h6m2 0h2m2 0h2m7 0h3m9 0h2M72 69h4m1 0h51m7 0h5m31 0h6m3 0h4m2 0h3m1 0h3m1 0h2m1 0h2m1 0h2m2 0h2m2 0h2m1 0h6m2 0h7m6 0h2m7 0h2M69 70h2m3 0h54m2 0h2m6 0h2m31 0h4m3 0h4m2 0h8m2 0h9m7 0h8m2 0h11m10 0h2M69 71h2m1 0h60m34 0h2m2 0h2m6 0h2m4 0h3m2 0h4m3 0h9m1 0h2m2 0h2m1 0h5m4 0h9m8 0h2M64 72h2m3 0h55m4 0h2m10 0h2m24 0h2m2 0h2m2 0h2m6 0h2m7 0h2m7 0h9m1 0h5m2 0h2m1 0h6m1 0h2m9 0h3M64 73h2m3 0h36m2 0h5m1 0h7m1 0h4m15 0h2m29 0h2m1 0h2m6 0h2m13 0h18m2 0h8m2 0h2m6 0h2m1 0h2M68 74h39m1 0h14m1 0h3m1 0h2m40 0h5m15 0h14m1 0h3m1 0h3m2 0h12m1 0h2m7 0h2m3 0h2m2 0h2M63 75h4m1 0h50m2 0h6m1 0h2m2 0h2m26 0h2m8 0h8m3 0h7m2 0h9m1 0h11m2 0h5m1 0h6m1 0h3m3 0h3m3 0h2m1 0h6M63 76h55m4 0h4m1 0h2m2 0h2m26 0h2m8 0h2m1 0h5m3 0h12m4 0h21m1 0h3m1 0h2m1 0h2m4 0h5m1 0h2m2 0h4M63 77h2m2 0h2m2 0h47m6 0h2m1 0h2m30 0h2m1 0h2m5 0h2m7 0h2m2 0h3m2 0h4m5 0h4m1 0h14m4 0h5m5 0h3m2 0h5M64 78h3m1 0h44m1 0h3m30 0h2m5 0h2m4 0h2m1 0h2m14 0h2m1 0h5m2 0h12m2 0h4m1 0h4m1 0h2m5 0h3m4 0h2m1 0h4m1 0h5M63 79h4m1 0h44m1 0h3m30 0h2m3 0h4m9 0h2m7 0h2m2 0h2m2 0h9m1 0h9m2 0h4m1 0h4m3 0h2m3 0h2m3 0h4m2 0h3m1 0h5m3 0h2M63 80h3m1 0h43m4 0h2m35 0h2m8 0h2m1 0h8m1 0h6m2 0h3m1 0h5m2 0h2m1 0h7m1 0h3m1 0h4m1 0h4m2 0h3m1 0h4m4 0h2m4 0h3m3 0h2m2 0h2M64 81h2m1 0h43m4 0h2m41 0h2m2 0h2m3 0h8m1 0h4m3 0h2m1 0h4m1 0h4m1 0h2m1 0h4m3 0h6m1 0h8m2 0h2m1 0h3m6 0h2m2 0h2m6 0h2M63 82h38m1 0h11m44 0h2m13 0h4m1 0h3m2 0h2m2 0h8m1 0h7m1 0h5m1 0h2m2 0h8m1 0h8m3 0h3m2 0h2M59 83h2m2 0h38m3 0h9m2 0h2m17 0h2m22 0h2m14 0h2m2 0h2m1 0h2m1 0h4m1 0h5m3 0h8m2 0h9m2 0h3m1 0h10m1 0h2M59 84h2m3 0h45m2 0h2m2 0h2m13 0h2m2 0h2m16 0h2m4 0h2m5 0h2m9 0h2m3 0h8m1 0h5m1 0h22m1 0h2m1 0h4m4 0h2M57 85h2m5 0h42m6 0h2m16 0h2m15 0h4m1 0h2m1 0h2m8 0h2m3 0h2m4 0h4m3 0h2m1 0h4m3 0h2m1 0h2m1 0h22m2 0h3m1 0h4m2 0h2M47 86h2m8 0h4m2 0h43m2 0h2m2 0h2m33 0h10m8 0h2m3 0h2m6 0h2m5 0h5m2 0h3m1 0h2m1 0h7m1 0h8m2 0h2m1 0h2m1 0h8m1 0h5M47 87h2m9 0h3m2 0h43m2 0h2m3 0h2m27 0h2m3 0h9m21 0h5m3 0h2m2 0h2m1 0h3m4 0h7m3 0h8m2 0h3m2 0h5m1 0h4m1 0h4m2 0h2M58 88h4m1 0h4m2 0h8m1 0h28m7 0h2m26 0h3m3 0h4m3 0h2m16 0h3m1 0h3m1 0h2m4 0h2m1 0h2m2 0h2m7 0h3m2 0h10m2 0h3m1 0h2m2 0h2m1 0h2m5 0h2m2 0h2M60 89h8m1 0h25m1 0h6m8 0h2m30 0h3m6 0h2m3 0h3m5 0h2m7 0h3m1 0h7m3 0h2m1 0h22m4 0h2m2 0h10m12 0h2m2 0h2M59 90h2m1 0h10m1 0h24m3 0h2m2 0h2m3 0h2m35 0h2m2 0h2m3 0h3m5 0h2m9 0h2m1 0h6m3 0h2m1 0h13m1 0h11m4 0h9m14 0h2m2 0h2M58 91h29m1 0h7m5 0h2m2 0h2m40 0h2m15 0h2m3 0h2m3 0h4m1 0h4m1 0h2m1 0h6m5 0h2m1 0h14m1 0h5m1 0h5m9 0h2M55 92h2m1 0h37m54 0h2m1 0h2m5 0h2m2 0h2m1 0h4m2 0h5m1 0h2m3 0h2m2 0h4m1 0h6m2 0h4m1 0h5m1 0h3m1 0h13m7 0h2M55 93h2m5 0h28m3 0h2m42 0h2m2 0h2m6 0h2m1 0h3m4 0h2m4 0h4m3 0h2m7 0h2m4 0h11m2 0h2m4 0h3m1 0h4m2 0h6m3 0h3m14 0h2M56 94h2m2 0h2m1 0h25m3 0h2m2 0h2m39 0h3m2 0h2m2 0h2m2 0h2m2 0h2m4 0h2m4 0h2m3 0h2m8 0h5m1 0h2m1 0h4m1 0h2m9 0h14m2 0h3m1 0h5m7 0h2m3 0h2M56 95h3m1 0h2m1 0h25m3 0h2m1 0h4m29 0h2m7 0h2m5 0h4m3 0h5m1 0h2m1 0h2m9 0h4m6 0h5m1 0h7m3 0h14m1 0h8m2 0h4m2 0h3m2 0h2m1 0h4M57 96h2m3 0h24m1 0h2m5 0h4m4 0h2m23 0h2m6 0h2m4 0h6m1 0h7m1 0h3m4 0h2m6 0h3m8 0h3m2 0h3m3 0h2m1 0h10m5 0h4m2 0h8m3 0h2m2 0h2m1 0h2m2 0h2M61 97h3m2 0h5m1 0h17m13 0h2m30 0h3m4 0h9m3 0h2m2 0h2m3 0h3m11 0h3m3 0h4m2 0h3m2 0h2m1 0h6m2 0h2m2 0h2m1 0h5m3 0h2m2 0h2m3 0h2m2 0h2m5 0h2M61 98h3m1 0h17m3 0h3m36 0h2m8 0h3m7 0h8m1 0h2m7 0h2m12 0h5m1 0h5m2 0h2m5 0h4m4 0h6m2 0h4m4 0h2m1 0h2m2 0h2m5 0h2M62 99h2m1 0h12m2 0h3m33 0h2m7 0h2m1 0h2m6 0h2m7 0h2m2 0h4m1 0h8m8 0h2m5 0h11m9 0h6m2 0h5m9 0h4m5 0h2m4 0h4M62 100h2m3 0h11m2 0h3m1 0h2m3 0h2m24 0h2m2 0h2m6 0h2m2 0h3m5 0h2m2 0h2m4 0h2m3 0h7m8 0h2m5 0h2m1 0h3m2 0h2m2 0h2m6 0h2m2 0h6m1 0h2m2 0h2m1 0h2m1 0h4m7 0h2m3 0h4M68 101h2m3 0h6m2 0h2m1 0h2m3 0h2m28 0h2m6 0h2m2 0h3m5 0h2m2 0h2m3 0h3m3 0h2m3 0h2m12 0h2m1 0h2m2 0h2m6 0h2m10 0h6m5 0h5m1 0h3m8 0h2M54 102h2m21 0h2m58 0h5m1 0h2m1 0h7m5 0h3m1 0h3m4 0h2m1 0h5m3 0h4m4 0h2m5 0h2m2 0h2m1 0h2m5 0h5m1 0h4m9 0h3M54 103h2m33 0h2m34 0h2m10 0h6m3 0h2m1 0h4m2 0h2m1 0h2m2 0h3m4 0h5m1 0h2m5 0h2m1 0h2m1 0h3m4 0h2m2 0h2m1 0h2m4 0h3m3 0h3m4 0h3m4 0h3M89 104h2m18 0h2m14 0h2m5 0h2m5 0h6m5 0h7m4 0h4m2 0h5m3 0h2m3 0h2m3 0h2m2 0h2m7 0h2m3 0h2m3 0h3m2 0h3m2 0h2m1 0h3m5 0h2m1 0h2M77 105h2m5 0h2m23 0h2m13 0h2m6 0h2m4 0h2m3 0h2m7 0h3m2 0h2m2 0h2m4 0h2m1 0h2m3 0h2m3 0h2m16 0h2m3 0h4m6 0h2m2 0h3m9 0h5M64 106h2m11 0h2m5 0h2m38 0h2m4 0h2m4 0h4m9 0h2m2 0h6m15 0h2m22 0h2m1 0h2m2 0h2m4 0h2m4 0h2m9 0h4M62 107h4m64 0h2m4 0h3m9 0h3m2 0h4m4 0h2m2 0h2m7 0h2m3 0h2m6 0h3m5 0h2m1 0h5m1 0h2m5 0h3m7 0h2m5 0h2M62 108h2m67 0h2m4 0h2m6 0h7m7 0h4m2 0h2m4 0h2m2 0h6m4 0h5m5 0h2m1 0h5m1 0h4m4 0h2m6 0h5M131 109h2m12 0h3m2 0h2m7 0h3m3 0h2m4 0h2m2 0h4m6 0h2m8 0h8m3 0h2m12 0h5M126 110h4m16 0h2m2 0h4m5 0h2m4 0h2m21 0h4m1 0h8m3 0h2m6 0h2m8 0h2M126 111h4m6 0h2m1 0h3m10 0h2m5 0h2m4 0h2m4 0h2m15 0h7m4 0h2m3 0h2m6 0h2M121 112h2m1 0h4m8 0h2m1 0h3m3 0h2m10 0h2m12 0h4m14 0h2m1 0h3m12 0h2m2 0h2m2 0h2M32 113h2m86 0h3m1 0h2m10 0h2m7 0h4m8 0h2m3 0h2m9 0h2m14 0h2m1 0h3m12 0h2m2 0h2m2 0h2M32 114h2m82 0h2m2 0h2m6 0h2m6 0h2m8 0h3m7 0h2m1 0h2m1 0h2m12 0h2m13 0h2m9 0h2m5 0h3M116 115h2m4 0h2m1 0h2m1 0h2m4 0h6m3 0h2m6 0h2m2 0h3m1 0h2m15 0h2m13 0h2m7 0h4m5 0h3m5 0h2M98 116h2m2 0h2m17 0h3m1 0h4m2 0h2m1 0h2m1 0h5m1 0h5m3 0h2m2 0h3m1 0h2m1 0h2m33 0h2m1 0h2m1 0h2m12 0h2M98 117h2m2 0h2m12 0h2m3 0h2m3 0h3m2 0h2m7 0h2m1 0h5m7 0h2m5 0h2m3 0h2m28 0h2m4 0h2m2 0h3m13 0h2M116 118h2m3 0h2m3 0h5m1 0h4m1 0h4m3 0h2m9 0h3m3 0h3m3 0h2m38 0h3m1 0h2m10 0h2M112 119h2m10 0h2m3 0h2m1 0h9m4 0h4m1 0h2m2 0h4m3 0h2m48 0h2M107 120h2m3 0h2m9 0h5m1 0h2m2 0h2m1 0h5m4 0h7m2 0h2m1 0h2m9 0h4m37 0h2M107 121h2m5 0h2m5 0h4m1 0h2m1 0h12m2 0h4m1 0h4m5 0h4m3 0h2m2 0h4m29 0h2m6 0h2M114 122h2m3 0h4m2 0h2m3 0h3m2 0h5m3 0h4m1 0h4m6 0h3m3 0h2m35 0h4m4 0h2M119 123h2m4 0h2m2 0h4m5 0h4m11 0h2m3 0h2m3 0h2m38 0h2m4 0h2M109 124h2m5 0h4m6 0h2m1 0h4m5 0h6m8 0h5m1 0h3m2 0h2M109 125h2m2 0h8m2 0h2m1 0h3m1 0h4m1 0h9m8 0h5m2 0h4m11 0h2m19 0h2M113 126h3m3 0h2m2 0h2m1 0h3m1 0h4m1 0h5m5 0h2m3 0h2m1 0h3m4 0h3m1 0h2m4 0h2m2 0h2m19 0h2M119 127h3m1 0h3m6 0h10m3 0h4m1 0h2m2 0h2m4 0h2m2 0h2m1 0h2m1 0h2M116 128h2m1 0h4m1 0h2m4 0h12m5 0h2m1 0h4m3 0h2m1 0h2m1 0h2m2 0h2M116 129h2m3 0h5m4 0h17m2 0h6m2 0h2m3 0h3M116 130h2m4 0h5m6 0h4m1 0h9m1 0h7m2 0h2m3 0h3m2 0h2M116 131h2m6 0h6m8 0h13m1 0h3m2 0h3m3 0h3m1 0h2M124 132h7m5 0h9m2 0h2m2 0h6m1 0h2m2 0h5M115 133h3m11 0h2m3 0h11m4 0h5m1 0h12M115 134h6m6 0h3m4 0h8m3 0h2m2 0h2m1 0h2m3 0h8M115 135h2m1 0h4m5 0h3m5 0h4m1 0h7m3 0h5m6 0h3M114 136h2m3 0h3m3 0h2m4 0h2m2 0h13m1 0h8m4 0h2m5 0h2M114 137h2m2 0h6m1 0h2m4 0h2m2 0h17m2 0h3m4 0h2m5 0h4M118 138h7m6 0h2m2 0h16m4 0h5m3 0h2m5 0h2M123 139h2m13 0h5m1 0h7m4 0h5m3 0h2m2 0h2M119 140h2m2 0h2m6 0h2m1 0h2m2 0h2m1 0h5m3 0h4m4 0h3m7 0h2M112 141h2m1 0h2m2 0h2m6 0h2m2 0h14m6 0h2m4 0h4m2 0h2M111 142h3m1 0h2m2 0h6m2 0h2m4 0h9m1 0h3m10 0h5m2 0h2m4 0h2M111 143h2m6 0h6m2 0h2m1 0h2m2 0h5m1 0h6m1 0h2m4 0h2m1 0h2m1 0h2m5 0h6M116 144h2m9 0h2m1 0h2m1 0h12m2 0h2m4 0h2m11 0h6M116 145h6m11 0h12m3 0h2m5 0h3M118 146h4m4 0h2m3 0h2m3 0h2m1 0h8m1 0h4m3 0h3m3 0h2M121 147h2m3 0h2m3 0h2m1 0h4m1 0h2m1 0h6m2 0h2m4 0h3m2 0h2M118 148h2m1 0h2m6 0h9m1 0h2m1 0h2m1 0h3m5 0h6m53 0h2m20 0h2M118 149h2m3 0h3m3 0h6m9 0h3m5 0h4m56 0h2m20 0h2M123 150h3m7 0h2m3 0h2m4 0h3m2 0h2m1 0h2M119 151h2m3 0h2m1 0h3m3 0h2m3 0h5m6 0h2M117 152h4m3 0h2m1 0h3m1 0h2m3 0h3m1 0h3m5 0h2m84 0h2M117 153h2m12 0h4m1 0h3m2 0h2m2 0h2m1 0h2m2 0h3m4 0h2m73 0h2M127 154h2m4 0h5m3 0h2m2 0h2m5 0h5m2 0h2m1 0h2M127 155h4m3 0h3m2 0h2m2 0h4m4 0h3m1 0h2m1 0h2m2 0h2M123 156h2m4 0h2m4 0h2m2 0h2m2 0h3m5 0h2m5 0h2M123 157h2m11 0h2m6 0h4m10 0h2M135 158h4m7 0h3m3 0h2m7 0h2M135 159h4m8 0h2m3 0h2m7 0h2M125 160h2m3 0h2M125 161h2m3 0h2m4 0h2m4 0h2m14 0h2M136 162h2m4 0h3m10 0h2m1 0h2M143 163h2m1 0h2m7 0h3M146 164h2m5 0h2m1 0h2M130 165h2m21 0h2M130 166h2m18 0h2M150 167h2M170 173h2M170 174h2M225 178h2M225 179h2m1 0h2M228 180h2M252 192h4M252 193h4"/></svg><path d="M187.5 -0.5V177.1M0.6 87.5H227" stroke="#e4e400" stroke-width="1.15" fill="none"/><path d="M0.5 178.7v3.8M38.5 178.7v3.8M76.5 178.7v3.8M113.5 178.7v3.8M151.5 178.7v3.8M189.5 178.7v3.8M226.5 178.7v3.8M-0.6 177.5h-3.6M-0.6 161.5h-3.6M-0.6 144.5h-3.6M-0.6 128.5h-3.6M-0.6 112.5h-3.6M-0.6 96.5h-3.6M-0.6 80.5h-3.6M-0.6 64.5h-3.6M-0.6 48.5h-3.6M-0.6 32.5h-3.6M-0.6 16.5h-3.6M-0.6 0.5h-3.6" stroke="#2a2a2a" stroke-width="1" fill="none"/></svg>
<span class="t" style="left:631.48px;top:286px;font-size:10.4px;color:#0e0e0e;transform:scaleX(0.810);">-0.7</span>
<span class="t" style="left:631.48px;top:270px;font-size:10.4px;color:#0e0e0e;transform:scaleX(0.810);">-0.6</span>
<span class="t" style="left:631.48px;top:254px;font-size:10.4px;color:#0e0e0e;transform:scaleX(0.810);">-0.5</span>
<span class="t" style="left:631.48px;top:238px;font-size:10.4px;color:#0e0e0e;transform:scaleX(0.810);">-0.4</span>
<span class="t" style="left:631.48px;top:222px;font-size:10.4px;color:#0e0e0e;transform:scaleX(0.810);">-0.3</span>
<span class="t" style="left:631.48px;top:206px;font-size:10.4px;color:#0e0e0e;transform:scaleX(0.810);">-0.2</span>
<span class="t" style="left:631.48px;top:190px;font-size:10.4px;color:#0e0e0e;transform:scaleX(0.810);">-0.1</span>
<span class="t" style="left:641.31px;top:173px;font-size:10.4px;color:#0e0e0e;transform:scaleX(0.810);">0</span>
<span class="t" style="left:634.29px;top:157px;font-size:10.4px;color:#0e0e0e;transform:scaleX(0.810);">0.1</span>
<span class="t" style="left:634.29px;top:141px;font-size:10.4px;color:#0e0e0e;transform:scaleX(0.810);">0.2</span>
<span class="t" style="left:634.29px;top:125px;font-size:10.4px;color:#0e0e0e;transform:scaleX(0.810);">0.3</span>
<span class="t" style="left:634.29px;top:109px;font-size:10.4px;color:#0e0e0e;transform:scaleX(0.810);">0.4</span>
<span class="t" style="left:645.34px;top:298px;font-size:10.4px;color:#0e0e0e;transform:scaleX(0.810);">-0.6</span>
<span class="t" style="left:683.08px;top:298px;font-size:10.4px;color:#0e0e0e;transform:scaleX(0.810);">-0.4</span>
<span class="t" style="left:720.81px;top:298px;font-size:10.4px;color:#0e0e0e;transform:scaleX(0.810);">-0.2</span>
<span class="t" style="left:763.46px;top:298px;font-size:10.4px;color:#0e0e0e;transform:scaleX(0.810);">0</span>
<span class="t" style="left:797.68px;top:298px;font-size:10.4px;color:#0e0e0e;transform:scaleX(0.810);">0.2</span>
<span class="t" style="left:835.41px;top:298px;font-size:10.4px;color:#0e0e0e;transform:scaleX(0.810);">0.4</span>
<span class="t" style="left:873.14px;top:298px;font-size:10.4px;color:#0e0e0e;transform:scaleX(0.810);">0.6</span>
<span class="t" style="left:611.96px;top:196.15px;font-size:9.7px;color:#0e0e0e;transform-origin:50% 50%;transform:rotate(-90deg) scaleX(0.927);">PC2</span>
<span class="t" style="left:710.8px;top:311px;font-size:9.7px;color:#0e0e0e;transform:scaleX(0.864);">PC1</span>
<div class="a btn" style="left:670px;top:334.5px;width:80px;height:37.5px;"></div>
<span class="t" style="left:684.75px;top:343px;font-size:9.8px;color:#111;font-weight:bold;transform:scaleX(0.895);">ASSOCIATE</span>
<span class="t" style="left:696px;top:355px;font-size:9.8px;color:#111;font-weight:bold;transform:scaleX(0.857);">PULSE</span>
<div class="a btnd" style="left:791px;top:334.5px;width:98px;height:37.5px;"></div>
<span class="t" style="left:803.25px;top:343px;font-size:9.8px;color:#111;font-weight:bold;transform:scaleX(0.914);">SHOW FILTERED</span>
<span class="t" style="left:821.25px;top:355px;font-size:9.8px;color:#111;font-weight:bold;transform:scaleX(0.957);">T-F MAP</span>
<span class="t" style="left:908.2px;top:93px;font-size:9.7px;color:#111;transform:scaleX(0.918);">Pulse Shape</span>
<div class="a frame" style="left:1117.6px;top:86.9px;width:76.4px;height:17.9px;border-top:1px solid #d6d6d6;border-bottom:1px solid #858585;"></div>
<span class="t" style="left:1129.6px;top:91px;font-size:9.7px;color:#0e0e0e;transform:scaleX(0.931);">Pulse</span>
<div class="a" style="left:1160.8px;top:89px;width:21.2px;height:13.4px;background:#000;"></div>
<svg class="a" style="left:1160.8px;top:89px" width="22" height="14"><path d="M1.5 10.4V2.8H9V10.4H18.3V1.4" stroke="#fff" stroke-width="1" fill="none"/></svg>
<div class="a frame" style="left:908.2px;top:105.4px;width:285.8px;height:219.5px;"></div>
<svg class="a" style="left:949px;top:105px" width="234" height="194" viewBox="-8 -8 234 194"><rect x="0.3" y="-0.5" width="217.4" height="177.6" fill="#000"/><path d="M5.5 -0.5V177.1M11.5 -0.5V177.1M16.5 -0.5V177.1M22.5 -0.5V177.1M32.5 -0.5V177.1M38.5 -0.5V177.1M43.5 -0.5V177.1M49.5 -0.5V177.1M60.5 -0.5V177.1M65.5 -0.5V177.1M70.5 -0.5V177.1M76.5 -0.5V177.1M87.5 -0.5V177.1M92.5 -0.5V177.1M98.5 -0.5V177.1M103.5 -0.5V177.1M114.5 -0.5V177.1M119.5 -0.5V177.1M125.5 -0.5V177.1M130.5 -0.5V177.1M141.5 -0.5V177.1M147.5 -0.5V177.1M152.5 -0.5V177.1M157.5 -0.5V177.1M168.5 -0.5V177.1M174.5 -0.5V177.1M179.5 -0.5V177.1M185.5 -0.5V177.1M195.5 -0.5V177.1M201.5 -0.5V177.1M206.5 -0.5V177.1M212.5 -0.5V177.1M0.3 172.5H217.7M0.3 168.5H217.7M0.3 163.5H217.7M0.3 159.5H217.7M0.3 150.5H217.7M0.3 146.5H217.7M0.3 141.5H217.7M0.3 137.5H217.7M0.3 128.5H217.7M0.3 124.5H217.7M0.3 119.5H217.7M0.3 115.5H217.7M0.3 106.5H217.7M0.3 101.5H217.7M0.3 97.5H217.7M0.3 93.5H217.7M0.3 84.5H217.7M0.3 79.5H217.7M0.3 75.5H217.7M0.3 71.5H217.7M0.3 62.5H217.7M0.3 57.5H217.7M0.3 53.5H217.7M0.3 48.5H217.7M0.3 40.5H217.7M0.3 35.5H217.7M0.3 31.5H217.7M0.3 26.5H217.7M0.3 17.5H217.7M0.3 13.5H217.7M0.3 9.5H217.7M0.3 4.5H217.7" stroke="#414100" stroke-width="1" fill="none"/><path d="M27.5 -0.5V177.1M54.5 -0.5V177.1M81.5 -0.5V177.1M108.5 -0.5V177.1M136.5 -0.5V177.1M163.5 -0.5V177.1M190.5 -0.5V177.1M0.3 154.5H217.7M0.3 132.5H217.7M0.3 110.5H217.7M0.3 88.5H217.7M0.3 66.5H217.7M0.3 44.5H217.7M0.3 22.5H217.7" stroke="#747400" stroke-width="1" fill="none"/><svg x="0.3" y="0.3" width="217.4" height="176.8" style="overflow:hidden"><path d="M0.0 88.5 0.8 87.6 1.7 88.1 2.5 87.2 3.3 87.2 4.2 86.2 5.0 86.1 5.9 85.8 6.7 85.8 7.5 87.5 8.4 88.2 9.2 89.5 10.0 91.0 10.9 89.9 11.7 89.8 12.5 91.0 13.4 90.1 14.2 89.4 15.1 90.4 15.9 89.9 16.7 89.6 17.6 88.7 18.4 87.9 19.2 86.9 20.1 89.0 20.9 88.3 21.7 88.7 22.6 88.8 23.4 89.7 24.2 88.1 25.1 89.3 25.9 89.2 26.8 88.8 27.6 89.0 28.4 89.2 29.3 89.1 30.1 89.0 30.9 89.7 31.8 89.2 32.6 88.5 33.4 89.2 34.3 88.9 35.1 87.5 36.0 88.0 36.8 86.4 37.6 87.5 38.5 87.7 39.3 88.2 40.1 87.6 41.0 88.2 41.8 88.2 42.6 88.5 43.5 87.5 44.3 89.1 45.2 88.5 46.0 89.0 46.8 88.8 47.7 88.5 48.5 88.0 49.3 89.5 50.2 88.3 51.0 89.4 51.8 89.2 52.7 88.5 53.5 87.9 54.4 87.9 55.2 87.1 56.0 88.2 56.9 86.8 57.7 87.6 58.5 87.9 59.4 87.4 60.2 88.5 61.0 91.7 61.9 101.4 62.7 121.6 63.5 145.5 64.4 155.2 65.2 158.6 66.1 162.5 66.9 168.1 67.7 171.9 68.6 173.3 69.4 170.5 70.2 167.8 71.1 164.4 71.9 160.9 72.7 153.5 73.6 140.9 74.4 127.2 75.3 113.7 76.1 106.6 76.9 97.2 77.8 84.4 78.6 70.2 79.4 55.2 80.3 41.8 81.1 35.9 81.9 32.2 82.8 28.8 83.6 22.0 84.5 17.1 85.3 12.6 86.1 9.3 87.0 10.0 87.8 12.9 88.6 17.4 89.5 19.5 90.3 23.1 91.1 27.7 92.0 36.1 92.8 46.6 93.6 57.6 94.5 66.3 95.3 72.9 96.2 77.4 97.0 86.6 97.8 94.8 98.7 105.2 99.5 115.3 100.3 122.7 101.2 127.0 102.0 131.6 102.8 135.7 103.7 139.0 104.5 140.6 105.4 138.6 106.2 135.3 107.0 131.1 107.9 128.4 108.7 126.3 109.5 122.2 110.4 116.9 111.2 109.6 112.0 101.3 112.9 93.2 113.7 87.3 114.6 83.1 115.4 79.4 116.2 75.6 117.1 70.4 117.9 63.9 118.7 58.4 119.6 52.8 120.4 49.0 121.2 48.3 122.1 46.8 122.9 44.2 123.8 43.0 124.6 44.4 125.4 46.6 126.3 48.3 127.1 51.1 127.9 52.1 128.8 53.6 129.6 58.2 130.4 61.4 131.3 66.8 132.1 71.8 132.9 76.5 133.8 81.0 134.6 83.0 135.5 86.3 136.3 90.3 137.1 95.9 138.0 102.0 138.8 106.5 139.6 111.0 140.5 112.7 141.3 113.6 142.1 114.3 143.0 115.6 143.8 114.7 144.7 110.2 145.5 108.9 146.3 107.0 147.2 104.7 148.0 102.9 148.8 97.9 149.7 93.2 150.5 88.6 151.3 84.8 152.2 81.0 153.0 77.8 153.9 76.1 154.7 73.8 155.5 71.3 156.4 67.7 157.2 65.2 158.0 63.3 158.9 62.1 159.7 61.1 160.5 60.4 161.4 63.0 162.2 63.5 163.1 66.7 163.9 68.6 164.7 70.7 165.6 71.4 166.4 73.0 167.2 76.1 168.1 80.3 168.9 83.6 169.7 87.2 170.6 90.4 171.4 92.6 172.2 93.3 173.1 95.6 173.9 98.2 174.8 100.9 175.6 103.1 176.4 104.5 177.3 105.4 178.1 106.0 178.9 105.0 179.8 103.8 180.6 102.6 181.4 100.6 182.3 99.3 183.1 99.1 184.0 97.3 184.8 96.2 185.6 94.3 186.5 94.7 187.3 93.5 188.1 93.0 189.0 90.0 189.8 86.5 190.6 81.9 191.5 78.6 192.3 74.6 193.2 73.5 194.0 72.3 194.8 69.8 195.7 68.4 196.5 69.6 197.3 68.7 198.2 71.1 199.0 70.2 199.8 71.6 200.7 72.2 201.5 71.6 202.3 73.7 203.2 76.1 204.0 79.0 204.9 82.6 205.7 86.6 206.5 87.8 207.4 90.1 208.2 91.7 209.0 95.3 209.9 97.3 210.7 99.9 211.5 101.6 212.4 102.7 213.2 103.0 214.1 102.7 214.9 102.9 215.7 102.9 216.6 101.7 217.4 101.4" stroke="#fff" stroke-width="1.05" fill="none" stroke-linejoin="round"/></svg><path d="M0.5 178.7v3.8M27.5 178.7v3.8M54.5 178.7v3.8M81.5 178.7v3.8M108.5 178.7v3.8M136.5 178.7v3.8M163.5 178.7v3.8M190.5 178.7v3.8M217.5 178.7v3.8M-0.9 177.5h-3.6M-0.9 154.5h-3.6M-0.9 132.5h-3.6M-0.9 110.5h-3.6M-0.9 88.5h-3.6M-0.9 66.5h-3.6M-0.9 44.5h-3.6M-0.9 22.5h-3.6M-0.9 0.5h-3.6" stroke="#2a2a2a" stroke-width="1" fill="none"/></svg>
<span class="t" style="left:925.91px;top:286px;font-size:10.4px;color:#0e0e0e;transform:scaleX(0.810);">-0.004</span>
<span class="t" style="left:925.91px;top:264px;font-size:10.4px;color:#0e0e0e;transform:scaleX(0.810);">-0.003</span>
<span class="t" style="left:925.91px;top:242px;font-size:10.4px;color:#0e0e0e;transform:scaleX(0.810);">-0.002</span>
<span class="t" style="left:925.91px;top:220px;font-size:10.4px;color:#0e0e0e;transform:scaleX(0.810);">-0.001</span>
<span class="t" style="left:945.11px;top:198px;font-size:10.4px;color:#0e0e0e;transform:scaleX(0.810);">0</span>
<span class="t" style="left:928.72px;top:176px;font-size:10.4px;color:#0e0e0e;transform:scaleX(0.810);">0.001</span>
<span class="t" style="left:928.72px;top:153px;font-size:10.4px;color:#0e0e0e;transform:scaleX(0.810);">0.002</span>
<span class="t" style="left:928.72px;top:131px;font-size:10.4px;color:#0e0e0e;transform:scaleX(0.810);">0.003</span>
<span class="t" style="left:928.72px;top:109px;font-size:10.4px;color:#0e0e0e;transform:scaleX(0.810);">0.004</span>
<span class="t" style="left:954.96px;top:298px;font-size:10.4px;color:#0e0e0e;transform:scaleX(0.810);">0</span>
<span class="t" style="left:975.1px;top:298px;font-size:10.4px;color:#0e0e0e;transform:scaleX(0.810);">250n</span>
<span class="t" style="left:1002.28px;top:298px;font-size:10.4px;color:#0e0e0e;transform:scaleX(0.810);">500n</span>
<span class="t" style="left:1029.45px;top:298px;font-size:10.4px;color:#0e0e0e;transform:scaleX(0.810);">750n</span>
<span class="t" style="left:1061.31px;top:298px;font-size:10.4px;color:#0e0e0e;transform:scaleX(0.810);">1u</span>
<span class="t" style="left:1082.63px;top:298px;font-size:10.4px;color:#0e0e0e;transform:scaleX(0.810);">1.25u</span>
<span class="t" style="left:1112.15px;top:298px;font-size:10.4px;color:#0e0e0e;transform:scaleX(0.810);">1.5u</span>
<span class="t" style="left:1136.98px;top:298px;font-size:10.4px;color:#0e0e0e;transform:scaleX(0.810);">1.75u</span>
<span class="t" style="left:1170.01px;top:298px;font-size:10.4px;color:#0e0e0e;transform:scaleX(0.810);">2u</span>
<span class="t" style="left:888.16px;top:196.15px;font-size:9.7px;color:#0e0e0e;transform-origin:50% 50%;transform:rotate(-90deg) scaleX(1.031);">Amplitude [V]</span>
<span class="t" style="left:1055px;top:311px;font-size:9.7px;color:#0e0e0e;transform:scaleX(0.944);">Time</span>
<span class="t" style="left:1204.6px;top:93px;font-size:10px;color:#111;font-weight:bold;transform:scaleX(0.931);">Filetered TF Map</span>
<div class="a frame" style="left:1309.9px;top:86.8px;width:180.8px;height:18px;border-top:1px solid #d6d6d6;border-bottom:1px solid #858585;"></div>
<span class="t" style="left:1321.9px;top:91px;font-size:9.7px;color:#0e0e0e;transform:scaleX(0.907);">CH1</span>
<div class="a" style="left:1348.9px;top:88.9px;width:21.3px;height:13.4px;background:#000;"></div>
<svg class="a" style="left:1348.9px;top:88.9px" width="22" height="14"><g fill="#fff"><rect x="9.1" y="1.5" width="1.8" height="1.8"/><rect x="1.2" y="9.3" width="1.8" height="1.8"/><rect x="17" y="9.3" width="1.8" height="1.8"/></g></svg>
<span class="t" style="left:1376.1px;top:91px;font-size:9.7px;color:#0e0e0e;transform:scaleX(0.907);">CH2</span>
<div class="a" style="left:1403.1px;top:88.9px;width:21.3px;height:13.4px;background:#000;"></div>
<svg class="a" style="left:1403.1px;top:88.9px" width="22" height="14"><g fill="#e8363c"><rect x="9.1" y="1.5" width="1.8" height="1.8"/><rect x="1.2" y="9.3" width="1.8" height="1.8"/><rect x="17" y="9.3" width="1.8" height="1.8"/></g></svg>
<span class="t" style="left:1430.3px;top:91px;font-size:9.7px;color:#0e0e0e;transform:scaleX(0.907);">CH3</span>
<div class="a" style="left:1457.3px;top:88.9px;width:21.3px;height:13.4px;background:#000;"></div>
<svg class="a" style="left:1457.3px;top:88.9px" width="22" height="14"><g fill="#22dc22"><rect x="9.1" y="1.5" width="1.8" height="1.8"/><rect x="1.2" y="9.3" width="1.8" height="1.8"/><rect x="17" y="9.3" width="1.8" height="1.8"/></g></svg>
<div class="a frame" style="left:1204.6px;top:105.4px;width:286.4px;height:219.5px;"></div>
<svg class="a" style="left:1238px;top:105px" width="242" height="194" viewBox="-8 -8 242 194"><rect x="0.6" y="-0.5" width="225" height="177.6" fill="#000"/><path d="M9.5 -0.5V177.1M18.5 -0.5V177.1M27.5 -0.5V177.1M36.5 -0.5V177.1M54.5 -0.5V177.1M63.5 -0.5V177.1M72.5 -0.5V177.1M81.5 -0.5V177.1M99.5 -0.5V177.1M108.5 -0.5V177.1M117.5 -0.5V177.1M126.5 -0.5V177.1M144.5 -0.5V177.1M153.5 -0.5V177.1M162.5 -0.5V177.1M171.5 -0.5V177.1M189.5 -0.5V177.1M198.5 -0.5V177.1M207.5 -0.5V177.1M216.5 -0.5V177.1M0.6 173.5H225.6M0.6 169.5H225.6M0.6 165.5H225.6M0.6 161.5H225.6M0.6 153.5H225.6M0.6 149.5H225.6M0.6 145.5H225.6M0.6 141.5H225.6M0.6 133.5H225.6M0.6 129.5H225.6M0.6 126.5H225.6M0.6 122.5H225.6M0.6 114.5H225.6M0.6 110.5H225.6M0.6 106.5H225.6M0.6 102.5H225.6M0.6 94.5H225.6M0.6 90.5H225.6M0.6 86.5H225.6M0.6 82.5H225.6M0.6 74.5H225.6M0.6 71.5H225.6M0.6 67.5H225.6M0.6 63.5H225.6M0.6 55.5H225.6M0.6 51.5H225.6M0.6 47.5H225.6M0.6 43.5H225.6M0.6 35.5H225.6M0.6 31.5H225.6M0.6 27.5H225.6M0.6 23.5H225.6M0.6 16.5H225.6M0.6 12.5H225.6M0.6 8.5H225.6M0.6 4.5H225.6" stroke="#414100" stroke-width="1" fill="none"/><path d="M45.5 -0.5V177.1M90.5 -0.5V177.1M135.5 -0.5V177.1M180.5 -0.5V177.1M0.6 157.5H225.6M0.6 137.5H225.6M0.6 118.5H225.6M0.6 98.5H225.6M0.6 78.5H225.6M0.6 59.5H225.6M0.6 39.5H225.6M0.6 19.5H225.6" stroke="#747400" stroke-width="1" fill="none"/><svg x="0.6" y="0.3" width="225" height="176.8" style="overflow:hidden"><path transform="scale(0.85) translate(0 .5)" stroke="#fff" stroke-width="1.27" fill="none" d="M66 5h2M66 6h2M49 10h2M49 11h2M47 31h2M47 32h2M54 35h2M54 36h2M161 45h2M161 46h2M43 50h2M43 51h2m44 0h2M89 52h2M43 54h2M43 55h2M75 56h2M75 57h2M65 60h2M65 61h2m144 0h2M211 62h2M41 63h2M41 64h2M82 65h2M82 66h2M60 67h2M60 68h2M43 69h2M43 70h2M73 73h2M73 74h2M67 75h2M41 76h2m24 0h2M41 77h2m74 0h2M117 78h2M36 81h2M36 82h2M64 85h2M64 86h2M78 91h2M78 92h2M28 95h2M21 96h2m5 0h2M21 97h2M33 98h2M33 99h2M28 101h3m58 0h2M28 102h3m58 0h2M46 103h2M46 104h2M28 107h2m78 0h2M28 108h2m78 0h2M35 109h2m22 0h2m9 0h2m16 0h2m2 0h2M21 110h2m10 0h4m22 0h2m7 0h4m16 0h2m2 0h2M21 111h2m10 0h2m33 0h2m3 0h2M27 112h2m44 0h2m1 0h2m185 0h2M27 113h2m47 0h2m1 0h2m10 0h2m170 0h2M25 114h2m16 0h2m8 0h2m24 0h2m10 0h2M25 115h2m7 0h2m7 0h2m8 0h2M34 116h2m5 0h2m5 0h2m8 0h2M41 117h2m5 0h2m5 0h2m1 0h2m35 0h2M25 118h2m28 0h2m7 0h2m29 0h2M25 119h2m4 0h4m28 0h3m34 0h2M25 120h2m3 0h5m28 0h2m35 0h2M25 121h2m3 0h2M26 122h2m2 0h2m2 0h2m48 0h2M26 123h2m2 0h2m2 0h2m2 0h2m14 0h2m28 0h2M26 124h2m1 0h4m1 0h2m2 0h2m14 0h2m6 0h2m36 0h2M22 125h2m2 0h10m9 0h2m15 0h2m36 0h2M22 126h2m2 0h6m1 0h4m6 0h6m38 0h2M21 127h2m1 0h2m4 0h2m1 0h5m5 0h2m2 0h2m31 0h2m5 0h3M21 128h2m1 0h5m2 0h7m4 0h2m3 0h2m20 0h2m9 0h2m6 0h2m51 0h2M25 129h4m1 0h8m4 0h2m25 0h2m70 0h3M23 130h2m2 0h2m1 0h2m1 0h5m29 0h2m2 0h2m69 0h2M23 131h8m1 0h5m8 0h2m20 0h2m2 0h2m17 0h2m45 0h3m5 0h2m2 0h2M19 132h2m2 0h8m1 0h5m4 0h2m2 0h2m10 0h2m7 0h2m22 0h2m7 0h2m36 0h4m2 0h8M19 133h2m2 0h8m2 0h4m4 0h2m14 0h8m1 0h2m3 0h2m1 0h4m21 0h2m34 0h2m1 0h3m2 0h8M23 134h2m1 0h2m1 0h2m2 0h5m21 0h6m6 0h2m1 0h4m15 0h4m38 0h2m2 0h12m75 0h2M29 135h2m4 0h3m44 0h2m9 0h4m41 0h7m2 0h2m77 0h2M20 136h2m1 0h8m1 0h2m2 0h4m16 0h2m6 0h2m3 0h3m10 0h2m2 0h2m50 0h7m2 0h2M20 137h2m1 0h19m10 0h2m2 0h2m6 0h4m1 0h3m3 0h2m9 0h2m50 0h11M24 138h13m3 0h2m8 0h5m9 0h4m7 0h3m60 0h3m2 0h4m1 0h3M26 139h8m1 0h2m2 0h3m8 0h2m1 0h2m9 0h2m5 0h2m1 0h4m5 0h2m38 0h2m5 0h2m2 0h2m1 0h2m9 0h3m1 0h2M27 140h7m1 0h2m2 0h3m2 0h2m18 0h2m5 0h2m1 0h2m7 0h2m38 0h4m3 0h2m1 0h3m1 0h9m1 0h2m3 0h2m1 0h4m37 0h2M22 141h2m2 0h11m7 0h2m9 0h2m6 0h2m2 0h3m10 0h3m42 0h2m1 0h2m1 0h5m2 0h8m1 0h4m3 0h5m37 0h2M22 142h3m1 0h12m2 0h3m2 0h2m5 0h2m1 0h2m2 0h6m2 0h3m2 0h4m4 0h4m9 0h2m10 0h4m9 0h2m5 0h2m1 0h14m1 0h4m1 0h11m7 0h2M18 143h2m3 0h15m2 0h4m1 0h2m4 0h3m2 0h2m1 0h5m6 0h6m1 0h2m3 0h3m8 0h2m10 0h4m5 0h2m2 0h2m5 0h35m6 0h2m20 0h2M18 144h2m3 0h23m5 0h2m1 0h4m5 0h3m4 0h2m5 0h2m4 0h5m4 0h2m20 0h2m2 0h2m1 0h10m1 0h29m12 0h2m13 0h2M19 145h27m8 0h4m5 0h3m4 0h3m1 0h2m1 0h2m4 0h5m1 0h2m1 0h2m8 0h2m2 0h2m6 0h2m1 0h8m2 0h4m1 0h32m9 0h2M17 146h25m1 0h6m7 0h2m3 0h4m4 0h4m1 0h6m2 0h2m5 0h2m9 0h4m2 0h2m2 0h54m28 0h2M17 147h3m1 0h28m6 0h2m3 0h3m6 0h3m2 0h6m2 0h2m11 0h2m2 0h3m1 0h2m1 0h17m1 0h42m9 0h2m15 0h2M19 148h28m6 0h4m1 0h5m2 0h2m13 0h3m12 0h2m2 0h2m1 0h20m1 0h44m8 0h2m6 0h2M19 149h26m4 0h2m2 0h4m1 0h2m1 0h3m1 0h7m1 0h3m1 0h2m1 0h3m3 0h4m4 0h3m2 0h68m16 0h2M10 150h3m1 0h2m1 0h2m1 0h27m2 0h2m4 0h2m1 0h2m2 0h14m1 0h2m3 0h16m1 0h21m1 0h45m1 0h3m9 0h2m10 0h3M10 151h3m1 0h2m1 0h30m3 0h3m3 0h4m3 0h6m2 0h4m2 0h2m3 0h5m1 0h10m2 0h10m1 0h5m1 0h53m9 0h2m10 0h3M14 152h2m2 0h29m1 0h6m2 0h2m5 0h7m2 0h7m2 0h3m1 0h2m1 0h10m1 0h69m4 0h2M12 153h4m2 0h25m2 0h5m2 0h2m5 0h8m1 0h2m2 0h6m3 0h2m7 0h8m1 0h67m6 0h2m10 0h2m10 0h2M12 154h2m1 0h2m1 0h24m1 0h2m1 0h2m2 0h2m2 0h2m3 0h9m2 0h2m1 0h7m1 0h2m1 0h3m2 0h76m1 0h2m16 0h2m10 0h2M13 155h34m3 0h6m1 0h2m3 0h6m2 0h13m1 0h80m1 0h3m7 0h2m15 0h2M13 156h43m1 0h2m2 0h7m3 0h8m1 0h4m1 0h82m8 0h2m5 0h2m8 0h2M15 157h28m2 0h7m1 0h2m4 0h5m1 0h2m1 0h2m1 0h2m2 0h35m1 0h55m16 0h2M15 158h29m4 0h2m3 0h2m4 0h2m4 0h5m8 0h35m1 0h44m3 0h5m16 0h2m2 0h2m12 0h2m1 0h2M15 159h2m1 0h29m1 0h10m1 0h4m3 0h4m3 0h80m1 0h5m1 0h5m10 0h2m5 0h2m2 0h2m12 0h2m1 0h2M16 160h2m2 0h28m2 0h8m1 0h4m1 0h95m1 0h5m10 0h2m9 0h2m11 0h2M16 161h2m2 0h23m3 0h2m2 0h4m1 0h8m1 0h86m1 0h3m1 0h4m15 0h2m3 0h2m5 0h2m1 0h2m1 0h2m5 0h2M11 162h2m1 0h2m1 0h29m4 0h4m1 0h4m2 0h3m2 0h11m1 0h2m4 0h5m1 0h65m2 0h4m3 0h2m8 0h2m3 0h3m5 0h4m1 0h2M11 163h2m1 0h2m1 0h29m4 0h2m1 0h2m7 0h2m3 0h8m1 0h2m6 0h5m1 0h37m1 0h20m1 0h3m1 0h2m1 0h5m3 0h2m5 0h2m4 0h2m1 0h2m5 0h2m2 0h2m5 0h2M14 164h2m1 0h3m1 0h26m1 0h2m1 0h4m6 0h3m4 0h5m3 0h2m3 0h2m1 0h6m1 0h2m1 0h11m1 0h11m1 0h25m1 0h4m1 0h11m6 0h4m1 0h2m1 0h2m1 0h2m12 0h2m5 0h3M17 165h2m2 0h19m2 0h2m1 0h5m1 0h5m4 0h4m4 0h5m1 0h9m2 0h2m1 0h2m1 0h2m1 0h5m1 0h6m1 0h3m1 0h35m3 0h11m6 0h4m4 0h2m9 0h2m12 0h2M17 166h23m4 0h7m2 0h5m2 0h3m3 0h2m1 0h4m1 0h8m7 0h4m1 0h20m1 0h16m1 0h14m1 0h4m2 0h4m1 0h3m3 0h6m3 0h2m8 0h4m15 0h2M14 167h26m1 0h2m1 0h3m2 0h2m3 0h4m3 0h9m2 0h5m8 0h7m1 0h4m1 0h13m4 0h10m1 0h4m5 0h3m1 0h3m2 0h2m1 0h4m2 0h2m1 0h2m1 0h2m3 0h2m2 0h4m1 0h5m4 0h3m17 0h2M8 168h2m4 0h4m1 0h2m1 0h18m1 0h3m1 0h2m7 0h3m5 0h15m5 0h2m1 0h4m1 0h2m1 0h5m4 0h4m3 0h3m1 0h5m2 0h5m1 0h6m3 0h3m3 0h2m1 0h2m1 0h3m2 0h3m1 0h2m10 0h4m3 0h5m2 0h2m9 0h2M8 169h2m7 0h24m1 0h4m7 0h7m1 0h4m5 0h4m3 0h2m3 0h6m1 0h2m1 0h6m11 0h3m1 0h2m5 0h2m1 0h2m2 0h5m3 0h2m1 0h2m1 0h2m5 0h2m2 0h2m4 0h2m8 0h2m8 0h3m12 0h2M17 170h24m1 0h4m4 0h2m1 0h3m1 0h3m1 0h3m3 0h4m1 0h2m3 0h2m1 0h2m1 0h5m1 0h5m15 0h4m4 0h2m1 0h2m1 0h3m1 0h6m2 0h2m1 0h2m5 0h2m6 0h9m8 0h2m1 0h3m3 0h2m4 0h4M19 171h4m1 0h18m8 0h2m9 0h2m4 0h4m4 0h7m1 0h2m1 0h2m2 0h2m7 0h2m6 0h3m1 0h8m2 0h7m2 0h3m10 0h8m2 0h10m7 0h2m1 0h3m3 0h2m2 0h8M20 172h2m2 0h10m2 0h7m18 0h2m2 0h2m8 0h2m2 0h2m5 0h2m2 0h2m7 0h2m6 0h4m2 0h5m3 0h3m1 0h3m2 0h4m1 0h2m1 0h2m3 0h8m4 0h2m1 0h2m1 0h2m7 0h3m1 0h2m3 0h2m2 0h2m4 0h2m3 0h2m2 0h2M20 173h2m1 0h12m1 0h2m3 0h2m14 0h2m6 0h2m5 0h2m6 0h3m26 0h2m4 0h2m2 0h2m2 0h2m7 0h2m1 0h2m1 0h2m5 0h2m5 0h2m4 0h6m1 0h2m2 0h4m1 0h2m11 0h2m5 0h2m2 0h2M23 174h7m1 0h6m20 0h2m6 0h5m2 0h2m6 0h3m21 0h2m9 0h2m2 0h6m5 0h2m3 0h2m3 0h2m6 0h2m2 0h2m4 0h9m1 0h3m4 0h2m10 0h2M19 175h3m4 0h4m1 0h6m24 0h2m3 0h4m5 0h2m15 0h2m6 0h2m2 0h2m13 0h4m7 0h2m8 0h5m3 0h2m11 0h2m1 0h2m2 0h3m4 0h2m5 0h2m1 0h4m1 0h3M19 176h3m1 0h3m1 0h3m2 0h2m1 0h2m24 0h2m1 0h5m4 0h4m8 0h2m5 0h2m6 0h2m2 0h2m13 0h7m7 0h3m3 0h6m10 0h2m9 0h7m1 0h2m2 0h2m2 0h2m1 0h2m3 0h5M23 177h3m1 0h2m2 0h3m25 0h2m3 0h2m4 0h2m1 0h3m1 0h2m6 0h2m32 0h2m2 0h3m7 0h4m2 0h2m2 0h2m10 0h2m9 0h3m2 0h5m2 0h2m4 0h2m7 0h2m30 0h2M23 178h4m4 0h2m26 0h2m7 0h4m5 0h2m11 0h2m19 0h2m22 0h2m11 0h2m2 0h4m4 0h4m9 0h2m9 0h2m39 0h2M24 179h5m1 0h3m34 0h3m2 0h2m16 0h2m19 0h3m8 0h2m24 0h2m2 0h4m4 0h4m15 0h2M27 180h2m1 0h2m26 0h2m5 0h4m3 0h2m38 0h2m8 0h2m11 0h2m11 0h2m12 0h2m15 0h5m37 0h2M31 181h2m25 0h4m3 0h2m68 0h2m11 0h2m30 0h4m37 0h2M27 182h2m2 0h2m27 0h2m3 0h2m14 0h2m2 0h2m90 0h2M27 183h2m31 0h2m1 0h4m14 0h2m2 0h2m90 0h2m2 0h2M60 184h2m1 0h2m7 0h2m8 0h3m96 0h2M60 185h4m7 0h3m8 0h3M58 186h3m1 0h2m7 0h2M58 187h4m7 0h2m4 0h2m12 0h4M58 188h5m6 0h2m4 0h3m11 0h5M61 189h2m3 0h3m7 0h2m3 0h2m1 0h2m6 0h2M61 190h2m3 0h3m10 0h4m1 0h2M56 191h2m3 0h2m12 0h2m2 0h2m2 0h2M56 192h2m3 0h2m6 0h2m2 0h4m6 0h4m10 0h2M57 193h2m10 0h3m1 0h2m10 0h2m10 0h2M57 194h2m11 0h2m2 0h2m4 0h2M71 195h2m1 0h2m1 0h2m1 0h2M55 196h2m12 0h4m4 0h2m7 0h2M55 197h2m12 0h5m12 0h2M64 198h2m4 0h4m2 0h2M64 199h2m4 0h2m4 0h4M78 200h2M70 201h2M70 202h2"/></svg><path d="M28.5 -0.5V177.1M0.6 140.5H225.6" stroke="#e4e400" stroke-width="1.15" fill="none"/><path d="M0.5 178.7v3.8M45.5 178.7v3.8M90.5 178.7v3.8M135.5 178.7v3.8M180.5 178.7v3.8M225.5 178.7v3.8M-0.6 177.5h-3.6M-0.6 157.5h-3.6M-0.6 137.5h-3.6M-0.6 118.5h-3.6M-0.6 98.5h-3.6M-0.6 78.5h-3.6M-0.6 59.5h-3.6M-0.6 39.5h-3.6M-0.6 19.5h-3.6M-0.6 0.5h-3.6" stroke="#2a2a2a" stroke-width="1" fill="none"/></svg>
<span class="t" style="left:1227.69px;top:286px;font-size:10.4px;color:#0e0e0e;transform:scaleX(0.810);">0.1</span>
<span class="t" style="left:1223px;top:266px;font-size:10.4px;color:#0e0e0e;transform:scaleX(0.810);">0.15</span>
<span class="t" style="left:1227.69px;top:247px;font-size:10.4px;color:#0e0e0e;transform:scaleX(0.810);">0.2</span>
<span class="t" style="left:1223px;top:227px;font-size:10.4px;color:#0e0e0e;transform:scaleX(0.810);">0.25</span>
<span class="t" style="left:1227.69px;top:207px;font-size:10.4px;color:#0e0e0e;transform:scaleX(0.810);">0.3</span>
<span class="t" style="left:1223px;top:188px;font-size:10.4px;color:#0e0e0e;transform:scaleX(0.810);">0.35</span>
<span class="t" style="left:1227.69px;top:168px;font-size:10.4px;color:#0e0e0e;transform:scaleX(0.810);">0.4</span>
<span class="t" style="left:1223px;top:148px;font-size:10.4px;color:#0e0e0e;transform:scaleX(0.810);">0.45</span>
<span class="t" style="left:1227.69px;top:129px;font-size:10.4px;color:#0e0e0e;transform:scaleX(0.810);">0.5</span>
<span class="t" style="left:1223px;top:109px;font-size:10.4px;color:#0e0e0e;transform:scaleX(0.810);">0.55</span>
<span class="t" style="left:1244.26px;top:298px;font-size:10.4px;color:#0e0e0e;transform:scaleX(0.810);">3</span>
<span class="t" style="left:1285.74px;top:298px;font-size:10.4px;color:#0e0e0e;transform:scaleX(0.810);">3.5</span>
<span class="t" style="left:1334.26px;top:298px;font-size:10.4px;color:#0e0e0e;transform:scaleX(0.810);">4</span>
<span class="t" style="left:1375.74px;top:298px;font-size:10.4px;color:#0e0e0e;transform:scaleX(0.810);">4.5</span>
<span class="t" style="left:1424.26px;top:298px;font-size:10.4px;color:#0e0e0e;transform:scaleX(0.810);">5</span>
<span class="t" style="left:1465.74px;top:298px;font-size:10.4px;color:#0e0e0e;transform:scaleX(0.810);">5.5</span>
<span class="t" style="left:1204.16px;top:196.15px;font-size:9.7px;color:#0e0e0e;transform-origin:50% 50%;transform:rotate(-90deg) scaleX(0.927);">PC2</span>
<span class="t" style="left:1350.15px;top:311px;font-size:9.7px;color:#0e0e0e;transform:scaleX(0.874);">PC1</span>
<span class="t" style="left:227.8px;top:393px;font-size:10px;color:#8e8e8e;font-weight:bold;transform:scaleX(0.911);">Pulse polarity selection mode</span>
<svg class="a" style="left:227.6px;top:405px" width="9.4" height="20.2" viewBox="0 0 9.4 20.2"><defs><linearGradient id="sg227" x1="0" y1="0" x2="1" y2="1"><stop offset="0" stop-color="#ececec"/><stop offset="1" stop-color="#b8b8b8"/></linearGradient></defs><rect x="0.5" y="0.5" width="8.4" height="19.2" rx="4" fill="url(#sg227)" stroke="#b4b4b4" stroke-width="0.7"/><path d="M1 10.1h7.4" stroke="#b4b4b4" stroke-width="0.8"/><path d="M4.7 3.4L7 7.4H2.4zM4.7 16.8L7 12.8H2.4z" fill="#d8d8d8" stroke="#c4c4c4" stroke-width="0.7"/></svg>
<div class="a" style="left:237px;top:406.8px;width:83.6px;height:18px;background:#f1f1f1;border-top:1px solid #d0d0d0;border-left:1px solid #d4d4d4;border-bottom:1px solid #fbfbfb;border-right:1px solid #fbfbfb;"></div>
<span class="t" style="left:240.2px;top:411px;font-size:9.6px;color:#9c9c9c;transform:scaleX(0.947);">First peak (A5)</span>
<span class="t" style="left:377.7px;top:393px;font-size:10px;color:#000;font-weight:bold;transform:scaleX(0.946);">Measurement circuit</span>
<div class="a" style="left:377.2px;top:407.4px;width:92px;height:16.2px;border:none;box-shadow:inset 1px 1px 0 #e2e2e2,inset -1px -1px 0 #6c6c6c;background:linear-gradient(180deg,#d2d2d2 0,#bdbdbd 50%,#a9a9a9 100%);"></div>
<span class="t" style="left:402.6px;top:411px;font-size:9.7px;color:#111;transform:scaleX(0.971);">Direct</span>
<svg class="a" style="left:451px;top:411px" width="13" height="10"><path d="M1.6 2.2h9.6L6.4 8.8z" fill="#c4c4c4" stroke="#5a5a5a" stroke-width="0.9"/></svg>
<div class="a" style="left:505.8px;top:391.4px;width:601.2px;height:37.2px;border-top:1.6px solid #cdcdcd;border-left:1px solid #c8c8c8;border-right:3.5px solid #fdfdfd;border-bottom:4px solid #fdfdfd;background:#f0f0f0;"></div>
<span class="t" style="left:528.6px;top:397px;font-size:10px;color:#111;font-weight:bold;transform:scaleX(0.905);">Elapsed time</span>
<span class="t" style="left:515px;top:414px;font-size:10px;color:#111;font-weight:bold;transform:scaleX(0.892);">Acquired pulses</span>
<div class="a" style="left:589.4px;top:398.6px;width:184.4px;height:6.6px;background:linear-gradient(180deg,#a9a9a9,#c9c9c9);border-top:1px solid #8c8c8c;border-bottom:1px solid #e2e2e2;border-radius:2px;"></div>
<div class="a" style="left:590px;top:399.6px;width:183.2px;height:4.4px;background:linear-gradient(180deg,#2a50e0,#0a2cc8);"></div>
<div class="a" style="left:589.4px;top:415.4px;width:184.4px;height:6.6px;background:linear-gradient(180deg,#a9a9a9,#c9c9c9);border-top:1px solid #8c8c8c;border-bottom:1px solid #e2e2e2;border-radius:2px;"></div>
<div class="a" style="left:590px;top:416.4px;width:122.38px;height:4.4px;background:linear-gradient(180deg,#2a50e0,#0a2cc8);"></div>
<div class="a" style="left:777.6px;top:393.9px;width:31px;height:13.2px;background:#d6d6d6;border-top:1px solid #c2c2c2;border-left:1px solid #c8c8c8;border-bottom:1px solid #f8f8f8;border-right:1px solid #f8f8f8;"></div>
<span class="t" style="left:781.2px;top:399px;font-size:7.6px;color:#3c3c3c;transform:scaleX(0.852);">41</span>
<div class="a" style="left:777.6px;top:410.6px;width:31px;height:13.2px;background:#d6d6d6;border-top:1px solid #c2c2c2;border-left:1px solid #c8c8c8;border-bottom:1px solid #f8f8f8;border-right:1px solid #f8f8f8;"></div>
<span class="t" style="left:781.2px;top:415px;font-size:7.6px;color:#3c3c3c;transform:scaleX(0.934);">4024</span>
<span class="t" style="left:832.9px;top:394px;font-size:10px;color:#111;font-weight:bold;transform:scaleX(0.922);">Timeout (in s)</span>
<svg class="a" style="left:824.2px;top:404.8px" width="9.4" height="20.2" viewBox="0 0 9.4 20.2"><defs><linearGradient id="sg824" x1="0" y1="0" x2="1" y2="1"><stop offset="0" stop-color="#ececec"/><stop offset="1" stop-color="#b8b8b8"/></linearGradient></defs><rect x="0.5" y="0.5" width="8.4" height="19.2" rx="4" fill="url(#sg824)" stroke="#7e7e7e" stroke-width="0.7"/><path d="M1 10.1h7.4" stroke="#7e7e7e" stroke-width="0.8"/><path d="M4.7 3.4L7 7.4H2.4zM4.7 16.8L7 12.8H2.4z" fill="#d8d8d8" stroke="#8c8c8c" stroke-width="0.7"/></svg>
<div class="a" style="left:834.2px;top:406.6px;width:40.4px;height:18px;background:#fafafa;border-top:1px solid #cfcfcf;border-left:1px solid #d4d4d4;border-bottom:1px solid #fff;border-right:1px solid #fff;"></div>
<span class="t" style="left:837.2px;top:410px;font-size:9.6px;color:#1c1c1c;transform:scaleX(0.899);">40</span>
<span class="t" style="left:933.7px;top:394px;font-size:10px;color:#111;font-weight:bold;transform:scaleX(0.890);">Pulses to acquire</span>
<svg class="a" style="left:924.4px;top:404.8px" width="9.4" height="20.2" viewBox="0 0 9.4 20.2"><defs><linearGradient id="sg924" x1="0" y1="0" x2="1" y2="1"><stop offset="0" stop-color="#ececec"/><stop offset="1" stop-color="#b8b8b8"/></linearGradient></defs><rect x="0.5" y="0.5" width="8.4" height="19.2" rx="4" fill="url(#sg924)" stroke="#7e7e7e" stroke-width="0.7"/><path d="M1 10.1h7.4" stroke="#7e7e7e" stroke-width="0.8"/><path d="M4.7 3.4L7 7.4H2.4zM4.7 16.8L7 12.8H2.4z" fill="#d8d8d8" stroke="#8c8c8c" stroke-width="0.7"/></svg>
<div class="a" style="left:934.4px;top:406.6px;width:41.4px;height:18px;background:#fafafa;border-top:1px solid #cfcfcf;border-left:1px solid #d4d4d4;border-bottom:1px solid #fff;border-right:1px solid #fff;"></div>
<span class="t" style="left:937.7px;top:410px;font-size:9.6px;color:#1c1c1c;transform:scaleX(0.880);">6000</span>
<div class="a btn" style="left:1020.4px;top:395.8px;width:76.8px;height:27.4px;"></div>
<span class="t" style="left:1037.9px;top:406px;font-size:10px;color:#0a0a0a;font-weight:bold;transform:scaleX(0.889);">ACQUIRE</span>
<div class="a btn" style="left:1315.8px;top:394px;width:86px;height:29px;"></div>
<span class="t" style="left:1325.8px;top:404px;font-size:10.6px;color:#0a0a0a;font-weight:bold;transform:scaleX(0.873);">UPLOAD DATA</span>
<div class="a btn" style="left:1411.6px;top:392.6px;width:86.2px;height:32.2px;"></div>
<span class="t" style="left:1442.6px;top:404px;font-size:10.6px;color:#f81414;font-weight:bold;transform:scaleX(0.837);">STOP</span>
<div class="a page" style="left:7px;top:430px;width:1495px;height:412px;border-bottom:none;"></div>
<div class="a" style="left:10.6px;top:434.8px;width:248.4px;height:400px;background:#b6b6b6;border-top:3px solid #cecece;border-left:3px solid #cccccc;border-right:2px solid #858585;"></div>
<div class="a" style="left:259px;top:434.8px;width:247.8px;height:400px;background:#b6b6b6;border-top:3px solid #cecece;border-left:3px solid #cccccc;border-right:2px solid #858585;"></div>
<div class="a" style="left:506.8px;top:434.8px;width:247.2px;height:400px;background:#b6b6b6;border-top:3px solid #cecece;border-left:3px solid #cccccc;border-right:2px solid #858585;"></div>
<div class="a tab" style="left:9.4px;top:412.4px;width:61px;height:17.6px;"></div>
<span class="t" style="left:16.6px;top:416px;font-size:9.7px;color:#0e0e0e;transform:scaleX(0.920);">Ch 1 Result</span>
<div class="a tab" style="left:135.4px;top:412.4px;width:61.4px;height:17.6px;"></div>
<span class="t" style="left:142.4px;top:416px;font-size:9.7px;color:#0e0e0e;transform:scaleX(0.920);">Ch 3 Result</span>
<div class="a tabsel" style="left:70.4px;top:410px;width:65.4px;height:23.2px;"></div>
<span class="t" style="left:78.2px;top:415px;font-size:9.7px;color:#0e0e0e;transform:scaleX(0.920);">Ch 2 Result</span>
<div class="a frame" style="left:15.7px;top:438.4px;width:239px;height:160.2px;"></div>
<div class="a frame" style="left:15.7px;top:599.4px;width:239px;height:159.6px;"></div>
<svg class="a" style="left:69px;top:439px" width="175" height="134" viewBox="-8 -8 175 134"><rect x="0.35" y="-0.5" width="158.05" height="118.2" fill="#000"/><path d="M4.5 -0.5V117.7M9.5 -0.5V117.7M13.5 -0.5V117.7M17.5 -0.5V117.7M26.5 -0.5V117.7M31.5 -0.5V117.7M35.5 -0.5V117.7M39.5 -0.5V117.7M48.5 -0.5V117.7M53.5 -0.5V117.7M57.5 -0.5V117.7M61.5 -0.5V117.7M70.5 -0.5V117.7M74.5 -0.5V117.7M79.5 -0.5V117.7M83.5 -0.5V117.7M92.5 -0.5V117.7M96.5 -0.5V117.7M101.5 -0.5V117.7M105.5 -0.5V117.7M114.5 -0.5V117.7M118.5 -0.5V117.7M123.5 -0.5V117.7M127.5 -0.5V117.7M136.5 -0.5V117.7M140.5 -0.5V117.7M145.5 -0.5V117.7M149.5 -0.5V117.7M0.35 113.5H158.4M0.35 109.5H158.4M0.35 105.5H158.4M0.35 102.5H158.4M0.35 94.5H158.4M0.35 90.5H158.4M0.35 86.5H158.4M0.35 82.5H158.4M0.35 74.5H158.4M0.35 70.5H158.4M0.35 66.5H158.4M0.35 62.5H158.4M0.35 55.5H158.4M0.35 51.5H158.4M0.35 47.5H158.4M0.35 43.5H158.4M0.35 35.5H158.4M0.35 31.5H158.4M0.35 27.5H158.4M0.35 23.5H158.4M0.35 15.5H158.4M0.35 12.5H158.4M0.35 8.5H158.4M0.35 4.5H158.4" stroke="#3a3a00" stroke-width="1" fill="none"/><path d="M22.5 -0.5V117.7M44.5 -0.5V117.7M66.5 -0.5V117.7M88.5 -0.5V117.7M110.5 -0.5V117.7M132.5 -0.5V117.7M153.5 -0.5V117.7M0.35 98.5H158.4M0.35 78.5H158.4M0.35 58.5H158.4M0.35 39.5H158.4M0.35 19.5H158.4" stroke="#6e6e00" stroke-width="1" fill="none"/><svg x="0.35" y="0.3" width="158.05" height="117.4" style="overflow:hidden"><path transform="scale(0.85) translate(0 .5)" stroke="#fff" stroke-width="1.27" fill="none" d="M32 28h2M32 29h2m2 0h2M36 30h2M21 31h2M21 32h2M21 33h2m16 0h2M21 34h2m2 0h5m9 0h2M25 35h5M21 36h2m1 0h2M21 37h5M20 38h4M20 39h6m3 0h2M19 40h8m2 0h2m9 0h2M18 41h10m12 0h2M18 42h10m2 0h2m17 0h2M17 43h11m2 0h3m16 0h2M17 44h13m1 0h4m3 0h2m3 0h2M19 45h11m3 0h2m3 0h2m3 0h2M17 46h15m1 0h2m1 0h2m2 0h2m7 0h2M17 47h27m1 0h2m2 0h2m93 0h2M17 48h27m1 0h5m94 0h2M17 49h17m1 0h18m64 0h2m4 0h2m1 0h2m7 0h2M17 50h17m1 0h5m1 0h12m64 0h4m2 0h2m1 0h2m4 0h2m1 0h2M17 51h16m2 0h4m1 0h12m65 0h9m5 0h12M16 52h38m7 0h2m57 0h9m2 0h2m1 0h11m1 0h2m5 0h2m2 0h2m1 0h2M12 53h3m1 0h47m54 0h5m2 0h5m2 0h2m1 0h28m1 0h2M12 54h51m54 0h9m7 0h28m2 0h2M14 55h49m54 0h10m5 0h24m2 0h2M16 56h46m55 0h3m1 0h3m1 0h2m5 0h24M18 57h11m1 0h3m1 0h3m1 0h6m2 0h4m4 0h2m62 0h2m2 0h2m9 0h15M19 58h2m5 0h2m90 0h2m13 0h2m4 0h4M118 59h2M35 79h2m5 0h7m3 0h2m1 0h2m4 0h3m72 0h2m3 0h7m1 0h14M24 80h2m2 0h36m65 0h4m1 0h29M21 81h43m50 0h2m3 0h2m1 0h41M21 82h43m49 0h44M12 83h2m6 0h43m46 0h42M12 84h2m6 0h43m46 0h36M22 85h2m1 0h8m1 0h16m1 0h5m53 0h34M20 86h4m4 0h5m76 0h27M20 87h3m2 0h2m3 0h2m77 0h27M20 88h2m3 0h2m3 0h2m15 0h2m60 0h27M22 89h5m20 0h2m60 0h26m4 0h4M22 90h3m1 0h3m80 0h27m1 0h6M26 91h3m80 0h2m2 0h23m1 0h2M27 92h2m82 0h2m1 0h21M38 93h2m69 0h4m1 0h21M38 94h2m69 0h26M111 95h24M111 96h24M111 97h22m1 0h2M114 98h22M114 99h20M114 100h19M114 101h18m1 0h2m6 0h2M113 102h18m2 0h2m6 0h2M113 103h18M114 104h20M115 105h2m1 0h16M115 106h3m1 0h2m1 0h11m2 0h2M116 107h2m1 0h2m1 0h10m3 0h2M118 108h2m1 0h11m6 0h2M118 109h2m1 0h3m4 0h4m6 0h2M122 110h2m1 0h5m1 0h2M120 111h2m2 0h5m2 0h2M120 112h2m2 0h3M121 113h2M121 114h2m4 0h2M127 115h2m2 0h2M131 116h2"/><path transform="scale(0.85) translate(0 .5)" stroke="#fa474c" stroke-width="1.27" fill="none" d="M35 30h2M21 31h2m12 0h2M21 32h2M21 38h3M20 39h5M20 40h7M19 41h8M19 42h8M18 43h5m2 0h2M18 44h9M19 45h8m16 0h2M18 46h9m16 0h2M18 47h8m2 0h2M19 48h6m2 0h3M21 49h5m1 0h3M21 50h2m1 0h2m2 0h2M21 51h5m2 0h2M22 52h4m2 0h2M109 86h4M109 87h8M109 88h8M109 89h7M109 90h7M114 93h2M111 94h2m1 0h2M111 95h2m1 0h6M113 96h8M113 97h8M115 98h7M115 99h2m3 0h2M114 100h4M114 101h4m1 0h2M113 102h3m2 0h3M113 103h2m3 0h3M115 105h2M115 106h3M116 107h2M118 108h2M118 109h2M130 113h2M130 114h2"/><path d="M0.0 58.7 1.8 55.7 3.5 52.7 5.3 49.8 7.0 46.8 8.8 44.0 10.5 41.2 12.3 38.5 14.0 35.9 15.8 33.4 17.6 31.0 19.3 28.8 21.1 26.7 22.8 24.8 24.6 23.0 26.3 21.4 28.1 20.0 29.9 18.8 31.6 17.8 33.4 16.9 35.1 16.3 36.9 15.9 38.6 15.7 40.4 15.7 42.1 15.9 43.9 16.3 45.7 16.9 47.4 17.8 49.2 18.8 50.9 20.0 52.7 21.4 54.4 23.0 56.2 24.8 58.0 26.7 59.7 28.8 61.5 31.0 63.2 33.4 65.0 35.9 66.7 38.5 68.5 41.2 70.2 44.0 72.0 46.8 73.8 49.8 75.5 52.7 77.3 55.7 79.0 58.7 80.8 61.7 82.5 64.7 84.3 67.6 86.0 70.6 87.8 73.4 89.6 76.2 91.3 78.9 93.1 81.5 94.8 84.0 96.6 86.4 98.3 88.6 100.1 90.7 101.9 92.6 103.6 94.4 105.4 96.0 107.1 97.4 108.9 98.6 110.6 99.6 112.4 100.5 114.1 101.1 115.9 101.5 117.7 101.7 119.4 101.7 121.2 101.5 122.9 101.1 124.7 100.5 126.4 99.6 128.2 98.6 130.0 97.4 131.7 96.0 133.5 94.4 135.2 92.6 137.0 90.7 138.7 88.6 140.5 86.4 142.2 84.0 144.0 81.5 145.8 78.9 147.5 76.2 149.3 73.4 151.0 70.6 152.8 67.6 154.5 64.7 156.3 61.7 158.1 58.7" stroke="#b84fd2" stroke-width="1.05" fill="none"/></svg><path d="M0.5 119.3v3.8M22.5 119.3v3.8M44.5 119.3v3.8M66.5 119.3v3.8M88.5 119.3v3.8M110.5 119.3v3.8M132.5 119.3v3.8M153.5 119.3v3.8M158.5 119.3v3.8M-0.85 117.5h-3.6M-0.85 98.5h-3.6M-0.85 78.5h-3.6M-0.85 58.5h-3.6M-0.85 39.5h-3.6M-0.85 19.5h-3.6M-0.85 0.5h-3.6" stroke="#2a2a2a" stroke-width="1" fill="none"/></svg>
<span class="t" style="left:46.66px;top:561px;font-size:10.4px;color:#0e0e0e;transform:scaleX(0.810);">-0.015</span>
<span class="t" style="left:51.35px;top:541px;font-size:10.4px;color:#0e0e0e;transform:scaleX(0.810);">-0.01</span>
<span class="t" style="left:46.66px;top:521px;font-size:10.4px;color:#0e0e0e;transform:scaleX(0.810);">-0.005</span>
<span class="t" style="left:65.86px;top:502px;font-size:10.4px;color:#0e0e0e;transform:scaleX(0.810);">0</span>
<span class="t" style="left:49.47px;top:482px;font-size:10.4px;color:#0e0e0e;transform:scaleX(0.810);">0.005</span>
<span class="t" style="left:54.15px;top:463px;font-size:10.4px;color:#0e0e0e;transform:scaleX(0.810);">0.01</span>
<span class="t" style="left:49.47px;top:443px;font-size:10.4px;color:#0e0e0e;transform:scaleX(0.810);">0.015</span>
<span class="t" style="left:75.01px;top:572px;font-size:10.4px;color:#0e0e0e;transform:scaleX(0.810);">0</span>
<span class="t" style="left:94.62px;top:572px;font-size:10.4px;color:#0e0e0e;transform:scaleX(0.810);">50</span>
<span class="t" style="left:114.22px;top:572px;font-size:10.4px;color:#0e0e0e;transform:scaleX(0.810);">100</span>
<span class="t" style="left:136.18px;top:572px;font-size:10.4px;color:#0e0e0e;transform:scaleX(0.810);">150</span>
<span class="t" style="left:158.13px;top:572px;font-size:10.4px;color:#0e0e0e;transform:scaleX(0.810);">200</span>
<span class="t" style="left:180.08px;top:572px;font-size:10.4px;color:#0e0e0e;transform:scaleX(0.810);">250</span>
<span class="t" style="left:202.03px;top:572px;font-size:10.4px;color:#0e0e0e;transform:scaleX(0.810);">300</span>
<span class="t" style="left:228.37px;top:572px;font-size:10.4px;color:#0e0e0e;transform:scaleX(0.810);">360</span>
<span class="t" style="left:7.8px;top:500.3px;font-size:9.4px;color:#0e0e0e;transform-origin:50% 50%;transform:rotate(-90deg) scaleX(1.037);">Amplitude [V]</span>
<span class="t" style="left:136.03px;top:586px;font-size:9.4px;color:#0e0e0e;transform:scaleX(0.980);">Phase [°]</span>
<svg class="a" style="left:56px;top:600px" width="188" height="134" viewBox="-8 -8 188 134"><rect x="0.8" y="-0.5" width="170.6" height="117.9" fill="#000"/><path d="M7.5 -0.5V117.4M14.5 -0.5V117.4M21.5 -0.5V117.4M28.5 -0.5V117.4M41.5 -0.5V117.4M48.5 -0.5V117.4M55.5 -0.5V117.4M62.5 -0.5V117.4M75.5 -0.5V117.4M82.5 -0.5V117.4M89.5 -0.5V117.4M96.5 -0.5V117.4M109.5 -0.5V117.4M116.5 -0.5V117.4M123.5 -0.5V117.4M130.5 -0.5V117.4M144.5 -0.5V117.4M150.5 -0.5V117.4M157.5 -0.5V117.4M164.5 -0.5V117.4M0.8 112.5H171.4M0.8 107.5H171.4M0.8 102.5H171.4M0.8 93.5H171.4M0.8 88.5H171.4M0.8 83.5H171.4M0.8 73.5H171.4M0.8 68.5H171.4M0.8 63.5H171.4M0.8 54.5H171.4M0.8 49.5H171.4M0.8 44.5H171.4M0.8 34.5H171.4M0.8 29.5H171.4M0.8 24.5H171.4M0.8 15.5H171.4M0.8 10.5H171.4M0.8 5.5H171.4" stroke="#3a3a00" stroke-width="1" fill="none"/><path d="M34.5 -0.5V117.4M69.5 -0.5V117.4M103.5 -0.5V117.4M137.5 -0.5V117.4M0.8 97.5H171.4M0.8 78.5H171.4M0.8 58.5H171.4M0.8 39.5H171.4M0.8 19.5H171.4" stroke="#6e6e00" stroke-width="1" fill="none"/><svg x="0.8" y="0.4" width="170.6" height="117" style="overflow:hidden"><path transform="scale(0.85) translate(0 .5)" stroke="#fff" stroke-width="1.27" fill="none" d="M109 1h2m20 0h2M109 2h2m5 0h2m13 0h2m2 0h2M116 3h2m17 0h2M109 6h2M97 7h2m10 0h2M97 8h2M81 9h2m45 0h2M81 10h2m36 0h2m1 0h2m4 0h2M119 11h5M100 12h2m5 0h2m2 0h2m8 0h2M94 13h2m4 0h2m5 0h2m2 0h2M71 14h2m21 0h2m8 0h2m2 0h2m10 0h2m6 0h2M71 15h2m20 0h2m6 0h2m1 0h2m2 0h4m3 0h2m3 0h2m6 0h2M67 16h2m12 0h3m9 0h2m3 0h2m1 0h2m2 0h4m1 0h2m1 0h4m7 0h2m2 0h2M67 17h2m7 0h2m3 0h5m6 0h3m3 0h4m2 0h5m1 0h2m1 0h2m1 0h3m5 0h2M76 18h2m6 0h4m4 0h3m5 0h2m1 0h9m4 0h3m3 0h2m1 0h2M64 19h2m3 0h2m4 0h2m1 0h2m6 0h5m1 0h2m2 0h3m1 0h2m1 0h3m2 0h3m3 0h10m1 0h2M61 20h5m3 0h4m2 0h2m1 0h2m7 0h4m2 0h8m2 0h23M61 21h8m2 0h2m2 0h3m4 0h2m3 0h2m4 0h3m2 0h23m3 0h2M65 22h8m3 0h2m4 0h4m3 0h2m2 0h3m2 0h23M59 23h2m5 0h5m2 0h7m4 0h3m1 0h3m3 0h29M58 24h3m2 0h17m4 0h39M53 25h2m3 0h2m3 0h17m4 0h2m1 0h35M51 26h4m1 0h5m1 0h5m1 0h6m2 0h4m2 0h41M51 27h2m3 0h19m2 0h3m2 0h3m1 0h37M53 28h4m1 0h23m2 0h37m1 0h2M47 29h2m4 0h67m1 0h2M47 30h2m5 0h66M46 31h74M46 32h69M48 33h67M46 34h63m1 0h2M40 35h4m2 0h59m2 0h2M40 36h61m6 0h2M40 37h56m1 0h6M39 38h58m2 0h4M39 39h51m4 0h3M32 40h2m2 0h54m4 0h2M32 41h2m2 0h54m4 0h2M34 42h43m1 0h7M30 43h2m2 0h46m5 0h2M30 44h2m2 0h41m1 0h2m7 0h2M29 45h51M29 46h41m2 0h8M29 47h41m3 0h2m14 0h2M29 48h36m1 0h2m21 0h2m2 0h2M30 49h38m25 0h2M26 50h2m2 0h36m1 0h2m11 0h2M25 51h3m1 0h40m8 0h2m1 0h2m8 0h3M18 52h2m5 0h36m1 0h2m1 0h3m9 0h2m7 0h2m2 0h5M18 53h2m6 0h35m1 0h2m2 0h2m18 0h2m2 0h5M26 54h35m2 0h2m21 0h2m1 0h2m1 0h2M23 55h2m1 0h28m2 0h2m1 0h2m2 0h2m24 0h2m1 0h2M23 56h2m1 0h27m29 0h5m4 0h3M24 57h2m1 0h28m20 0h2m5 0h12M24 58h27m1 0h3m3 0h2m15 0h2m4 0h2m3 0h8M25 59h2m1 0h21m9 0h2m7 0h2m4 0h2m6 0h3m2 0h8M28 60h12m1 0h5m2 0h2m17 0h2m1 0h2m1 0h5m1 0h5m1 0h9M33 61h13m2 0h2m20 0h2m3 0h3m1 0h2m3 0h5m2 0h2M23 62h2m14 0h2m7 0h2m13 0h2m9 0h2m7 0h11M23 63h2m14 0h2m3 0h2m2 0h2m13 0h2m8 0h3m3 0h2m2 0h8m1 0h2M28 64h4m7 0h2m3 0h2m27 0h2m3 0h3m1 0h3m2 0h2m3 0h2M28 65h4m46 0h2m2 0h3m4 0h5M75 66h5m9 0h5M75 67h3m4 0h5m1 0h3m1 0h2M7 68h2m62 0h6m5 0h5m1 0h4M7 69h2m59 0h2m1 0h7m2 0h6m1 0h5m1 0h2M55 70h4m8 0h3m1 0h20m2 0h2M55 71h4m8 0h2m2 0h3m1 0h16M65 72h2m5 0h15m1 0h6M61 73h2m2 0h3m3 0h15m1 0h7M61 74h2m3 0h2m1 0h4m1 0h2m1 0h17M63 75h8m1 0h9m1 0h7M63 76h31M68 77h19m1 0h6M67 78h9m2 0h16M67 79h2m3 0h7m1 0h14M67 80h3m4 0h5m2 0h8m1 0h5M67 81h5m3 0h4m2 0h14M66 82h6m2 0h20M66 83h2m1 0h7m2 0h16M70 84h5m3 0h15M65 85h4m1 0h5m1 0h14m1 0h2M64 86h5m1 0h20M64 87h2m2 0h4m3 0h18M68 88h5m2 0h2m2 0h15M71 89h2m2 0h16m1 0h2M69 90h6m2 0h14M69 91h6m1 0h2m2 0h2m1 0h10M68 92h4m1 0h2m1 0h2m1 0h9m1 0h4M68 93h2m5 0h12m1 0h5M73 94h6m2 0h2m1 0h2m1 0h3m3 0h2M73 95h2m6 0h5m1 0h5m1 0h2M81 96h4m5 0h2M74 97h2m2 0h2m2 0h3m2 0h2M74 98h2m2 0h2m2 0h2m3 0h2m1 0h2M87 99h2m1 0h2M78 100h2M78 101h2m12 0h2M92 102h2"/><path transform="scale(0.85) translate(0 .5)" stroke="#fa474c" stroke-width="1.27" fill="none" d="M163 18h2M163 19h2M143 22h2M142 23h3M138 24h2m2 0h2m22 0h2M138 25h2m26 0h2M138 26h2m16 0h2M122 27h2m10 0h2m7 0h2m11 0h2M120 28h4m10 0h2m7 0h2m13 0h2M120 29h2m36 0h2M130 30h2m1 0h2m7 0h2m10 0h2M115 31h4m11 0h2m1 0h2m7 0h2m10 0h2M115 32h4m7 0h2m2 0h2m2 0h5m4 0h2M115 33h2m1 0h2m6 0h4m1 0h2m1 0h5m2 0h6m2 0h2M105 34h2m2 0h2m7 0h4m2 0h6m1 0h2m1 0h2m5 0h7m1 0h2M105 35h2m2 0h2m7 0h4m2 0h2m2 0h2m1 0h2m1 0h3m2 0h4m2 0h6m9 0h3M107 36h2m6 0h2m2 0h6m3 0h2m3 0h9m3 0h7m2 0h2m4 0h3M107 37h2m6 0h4m3 0h3m1 0h16m1 0h9m2 0h2m5 0h2M111 38h3m3 0h2m1 0h5m1 0h2m1 0h9m1 0h11M111 39h3m2 0h3m1 0h8m1 0h9m1 0h8m1 0h4m5 0h2M112 40h6m4 0h8m1 0h4m1 0h2m2 0h6m3 0h5m3 0h2m2 0h2M108 41h22m1 0h17m1 0h5m4 0h2m1 0h2M107 42h26m1 0h19m5 0h2M104 43h2m1 0h4m1 0h2m1 0h5m1 0h30m5 0h4M104 44h7m4 0h2m3 0h27m1 0h2m4 0h5M99 45h2m5 0h6m2 0h5m1 0h29m2 0h11M99 46h4m3 0h17m2 0h16m1 0h20M94 47h2m3 0h4m3 0h2m3 0h30m1 0h4m1 0h10M94 48h2m3 0h9m1 0h4m1 0h27m1 0h7m1 0h7m2 0h2m1 0h2M98 49h17m1 0h42m1 0h2m1 0h2M93 50h2m3 0h2m8 0h12m1 0h34m1 0h2M93 51h2m1 0h4m3 0h2m2 0h2m2 0h43M94 52h4m5 0h2m2 0h2m2 0h46m1 0h2M94 53h3m5 0h2m4 0h8m1 0h10m1 0h13m1 0h11m1 0h3m1 0h2m1 0h2M96 54h3m3 0h2m4 0h8m2 0h34m6 0h2m1 0h2M94 55h7m1 0h5m2 0h40m5 0h2m2 0h2M94 56h2m3 0h2m1 0h5m1 0h10m1 0h9m1 0h20m5 0h3m2 0h2M94 57h4m1 0h2m2 0h7m4 0h36m2 0h5m2 0h2M94 58h10m3 0h3m1 0h3m1 0h32m1 0h3m1 0h4m1 0h2M94 59h5m2 0h3m7 0h19m1 0h9m2 0h2m1 0h2m1 0h3m1 0h4m1 0h2M94 60h9m3 0h2m3 0h8m6 0h11m2 0h2m1 0h3m4 0h2m2 0h4M95 61h9m2 0h2m1 0h8m3 0h2m3 0h2m1 0h15m6 0h2M93 62h2m1 0h8m2 0h6m2 0h5m1 0h3m2 0h4m1 0h2m2 0h12m2 0h4M93 63h11m1 0h7m2 0h2m1 0h2m2 0h2m4 0h2m1 0h2m2 0h3m1 0h8m2 0h6M94 64h5m1 0h2m1 0h4m2 0h3m7 0h3m5 0h7m2 0h3m2 0h2m6 0h5M94 65h4m1 0h3m1 0h2m2 0h8m2 0h5m3 0h10m1 0h3m2 0h6m2 0h3M93 66h2m4 0h3m1 0h2m2 0h2m1 0h5m2 0h2m1 0h15m2 0h2m4 0h4M93 67h2m2 0h4m2 0h2m2 0h2m11 0h10m1 0h2m3 0h5M97 68h2m2 0h2m4 0h4m9 0h5m9 0h4m1 0h2M97 69h6m6 0h4m9 0h3m3 0h4m2 0h3m3 0h2M96 70h7m8 0h2m9 0h2m2 0h7m2 0h2m3 0h2M96 71h7m2 0h2m19 0h2m3 0h7m7 0h2M95 72h4m1 0h3m2 0h3m25 0h5m7 0h2M95 73h6m2 0h5m21 0h2m4 0h2M94 74h2m2 0h3m1 0h5m22 0h4m2 0h2M94 75h3m1 0h3m1 0h2m5 0h2m14 0h2m4 0h2m2 0h2M94 76h3m2 0h5m3 0h4m14 0h2M94 77h10m1 0h4M94 78h2m1 0h6m2 0h2M94 79h2m1 0h3m1 0h3m1 0h2M93 80h12M93 81h12M94 82h5m1 0h3m2 0h2M94 83h10m1 0h4M93 84h2m1 0h4m2 0h4m1 0h2M93 85h2m1 0h7m1 0h2M96 86h7m1 0h5M94 87h4m1 0h2m3 0h5M94 88h5m1 0h2M96 89h3m1 0h2M94 90h5m38 0h2m14 0h2M94 91h3m40 0h2m14 0h2M93 92h2m4 0h2m52 0h2M93 93h5m1 0h4m50 0h2M93 94h7m1 0h2M94 95h2m2 0h4M94 96h2m4 0h2M98 97h2M96 98h4M95 99h4M95 100h2M107 105h2M107 106h2M147 108h3M147 109h3M166 116h4M166 117h4"/></svg><path d="M0.5 119v3.8M34.5 119v3.8M69.5 119v3.8M103.5 119v3.8M137.5 119v3.8M171.5 119v3.8M-0.4 117.5h-3.6M-0.4 97.5h-3.6M-0.4 78.5h-3.6M-0.4 58.5h-3.6M-0.4 39.5h-3.6M-0.4 19.5h-3.6M-0.4 0.5h-3.6" stroke="#2a2a2a" stroke-width="1" fill="none"/></svg>
<span class="t" style="left:43.28px;top:721px;font-size:10.4px;color:#0e0e0e;transform:scaleX(0.810);">-0.8</span>
<span class="t" style="left:43.28px;top:702px;font-size:10.4px;color:#0e0e0e;transform:scaleX(0.810);">-0.6</span>
<span class="t" style="left:43.28px;top:682px;font-size:10.4px;color:#0e0e0e;transform:scaleX(0.810);">-0.4</span>
<span class="t" style="left:43.28px;top:663px;font-size:10.4px;color:#0e0e0e;transform:scaleX(0.810);">-0.2</span>
<span class="t" style="left:53.11px;top:643px;font-size:10.4px;color:#0e0e0e;transform:scaleX(0.810);">0</span>
<span class="t" style="left:46.09px;top:624px;font-size:10.4px;color:#0e0e0e;transform:scaleX(0.810);">0.2</span>
<span class="t" style="left:46.09px;top:604px;font-size:10.4px;color:#0e0e0e;transform:scaleX(0.810);">0.4</span>
<span class="t" style="left:57.54px;top:733px;font-size:10.4px;color:#0e0e0e;transform:scaleX(0.810);">-0.5</span>
<span class="t" style="left:89.32px;top:733px;font-size:10.4px;color:#0e0e0e;transform:scaleX(0.810);">-0.25</span>
<span class="t" style="left:130.7px;top:733px;font-size:10.4px;color:#0e0e0e;transform:scaleX(0.810);">0</span>
<span class="t" style="left:158.96px;top:733px;font-size:10.4px;color:#0e0e0e;transform:scaleX(0.810);">0.25</span>
<span class="t" style="left:195.42px;top:733px;font-size:10.4px;color:#0e0e0e;transform:scaleX(0.810);">0.5</span>
<span class="t" style="left:227.2px;top:733px;font-size:10.4px;color:#0e0e0e;transform:scaleX(0.810);">0.75</span>
<span class="t" style="left:23.26px;top:661.3px;font-size:9.4px;color:#0e0e0e;transform-origin:50% 50%;transform:rotate(-90deg) scaleX(0.930);">PC2</span>
<span class="t" style="left:142.1px;top:746px;font-size:9.4px;color:#0e0e0e;transform:scaleX(0.875);">PC1</span>
<div class="a frame" style="left:262.4px;top:438.4px;width:239.9px;height:160.2px;"></div>
<div class="a frame" style="left:262.4px;top:599.4px;width:239.9px;height:159.6px;"></div>
<svg class="a" style="left:312px;top:439px" width="180" height="134" viewBox="-8 -8 180 134"><rect x="0.2" y="-0.5" width="163.05" height="118.2" fill="#000"/><path d="M4.5 -0.5V117.7M9.5 -0.5V117.7M13.5 -0.5V117.7M18.5 -0.5V117.7M27.5 -0.5V117.7M31.5 -0.5V117.7M36.5 -0.5V117.7M40.5 -0.5V117.7M50.5 -0.5V117.7M54.5 -0.5V117.7M59.5 -0.5V117.7M63.5 -0.5V117.7M72.5 -0.5V117.7M77.5 -0.5V117.7M81.5 -0.5V117.7M86.5 -0.5V117.7M95.5 -0.5V117.7M99.5 -0.5V117.7M104.5 -0.5V117.7M108.5 -0.5V117.7M117.5 -0.5V117.7M122.5 -0.5V117.7M127.5 -0.5V117.7M131.5 -0.5V117.7M140.5 -0.5V117.7M145.5 -0.5V117.7M149.5 -0.5V117.7M154.5 -0.5V117.7M0.2 113.5H163.25M0.2 109.5H163.25M0.2 105.5H163.25M0.2 102.5H163.25M0.2 94.5H163.25M0.2 90.5H163.25M0.2 86.5H163.25M0.2 82.5H163.25M0.2 74.5H163.25M0.2 70.5H163.25M0.2 66.5H163.25M0.2 62.5H163.25M0.2 55.5H163.25M0.2 51.5H163.25M0.2 47.5H163.25M0.2 43.5H163.25M0.2 35.5H163.25M0.2 31.5H163.25M0.2 27.5H163.25M0.2 23.5H163.25M0.2 15.5H163.25M0.2 12.5H163.25M0.2 8.5H163.25M0.2 4.5H163.25" stroke="#3a3a00" stroke-width="1" fill="none"/><path d="M22.5 -0.5V117.7M45.5 -0.5V117.7M68.5 -0.5V117.7M90.5 -0.5V117.7M113.5 -0.5V117.7M136.5 -0.5V117.7M158.5 -0.5V117.7M0.2 98.5H163.25M0.2 78.5H163.25M0.2 58.5H163.25M0.2 39.5H163.25M0.2 19.5H163.25" stroke="#6e6e00" stroke-width="1" fill="none"/><svg x="0.2" y="0.3" width="163.05" height="117.4" style="overflow:hidden"><path transform="scale(0.85) translate(0 .5)" stroke="#fff" stroke-width="1.27" fill="none" d="M33 28h2M33 29h2m2 0h2M37 30h2M22 31h2M22 32h2M21 33h2m17 0h2M21 34h2m3 0h5m9 0h2M26 35h5M22 36h2m1 0h2M21 37h6M21 38h4M21 39h6m3 0h2M19 40h9m2 0h2m10 0h2M18 41h11m13 0h2M18 42h11m2 0h2m17 0h2M17 43h12m2 0h3m16 0h2M17 44h13m2 0h4m3 0h2m4 0h2M19 45h12m3 0h2m3 0h2m4 0h2M18 46h15m1 0h2m1 0h2m2 0h2m7 0h2M17 47h23m1 0h5m1 0h2m1 0h2m96 0h2M17 48h29m1 0h5m96 0h2M17 49h18m1 0h12m1 0h5m67 0h2m4 0h2m1 0h2m7 0h2M17 50h18m2 0h17m66 0h5m2 0h2m1 0h2m4 0h2m1 0h2M17 51h18m2 0h3m2 0h12m66 0h10m5 0h3m1 0h9M16 52h39m8 0h2m59 0h9m2 0h2m2 0h11m1 0h2m5 0h2m2 0h2m1 0h2M13 53h52m55 0h6m2 0h5m2 0h2m2 0h28m1 0h2M13 54h52m55 0h10m8 0h28m2 0h2M15 55h50m56 0h10m5 0h25m2 0h2M17 56h47m57 0h2m2 0h3m1 0h2m5 0h2m1 0h22M19 57h7m1 0h3m1 0h3m2 0h2m2 0h6m2 0h3m5 0h2m63 0h2m3 0h2m9 0h10m1 0h5M20 58h2m5 0h2m93 0h2m13 0h2m4 0h4M122 59h2M36 79h2m5 0h8m2 0h2m1 0h2m5 0h3m75 0h2m3 0h22M25 80h2m2 0h37m68 0h4m1 0h29M22 81h44m51 0h2m4 0h2m1 0h42M21 82h45m50 0h46M12 83h2m7 0h44m47 0h44M12 84h2m7 0h39m1 0h4m47 0h38M22 85h3m1 0h2m1 0h5m1 0h17m1 0h5m54 0h31m1 0h3M20 86h5m4 0h5m78 0h28M20 87h4m2 0h2m3 0h2m79 0h28M21 88h2m2 0h3m3 0h2m15 0h2m63 0h27M23 89h4m21 0h2m63 0h27m3 0h4M23 90h3m1 0h3m83 0h27m2 0h5M27 91h3m83 0h2m1 0h24m2 0h2M28 92h2m84 0h2m1 0h23M39 93h2m72 0h3m1 0h22M39 94h2m72 0h3m1 0h22M114 95h25M115 96h24M115 97h23m1 0h2M117 98h21m1 0h2M117 99h21M117 100h20M117 101h19m2 0h2m5 0h2M117 102h18m3 0h2m5 0h2M117 103h18M118 104h20M119 105h2m1 0h3m1 0h12M119 106h3m1 0h2m1 0h11m3 0h2M120 107h2m1 0h2m1 0h2m1 0h7m4 0h2M122 108h2m1 0h3m1 0h7m7 0h2M122 109h2m1 0h3m4 0h4m7 0h2M125 110h2m1 0h2m1 0h3m1 0h2M124 111h2m2 0h5m2 0h2M124 112h2m2 0h3M125 113h2M125 114h2m4 0h2M131 115h2m2 0h2M135 116h2"/><path d="M0.0 58.7 1.8 55.7 3.6 52.7 5.4 49.8 7.2 46.8 9.1 44.0 10.9 41.2 12.7 38.5 14.5 35.9 16.3 33.4 18.1 31.0 19.9 28.8 21.7 26.7 23.6 24.8 25.4 23.0 27.2 21.4 29.0 20.0 30.8 18.8 32.6 17.8 34.4 16.9 36.2 16.3 38.0 15.9 39.9 15.7 41.7 15.7 43.5 15.9 45.3 16.3 47.1 16.9 48.9 17.8 50.7 18.8 52.5 20.0 54.4 21.4 56.2 23.0 58.0 24.8 59.8 26.7 61.6 28.8 63.4 31.0 65.2 33.4 67.0 35.9 68.8 38.5 70.7 41.2 72.5 44.0 74.3 46.8 76.1 49.8 77.9 52.7 79.7 55.7 81.5 58.7 83.3 61.7 85.1 64.7 87.0 67.6 88.8 70.6 90.6 73.4 92.4 76.2 94.2 78.9 96.0 81.5 97.8 84.0 99.6 86.4 101.5 88.6 103.3 90.7 105.1 92.6 106.9 94.4 108.7 96.0 110.5 97.4 112.3 98.6 114.1 99.6 115.9 100.5 117.8 101.1 119.6 101.5 121.4 101.7 123.2 101.7 125.0 101.5 126.8 101.1 128.6 100.5 130.4 99.6 132.3 98.6 134.1 97.4 135.9 96.0 137.7 94.4 139.5 92.6 141.3 90.7 143.1 88.6 144.9 86.4 146.7 84.0 148.6 81.5 150.4 78.9 152.2 76.2 154.0 73.4 155.8 70.6 157.6 67.6 159.4 64.7 161.2 61.7 163.1 58.7" stroke="#b84fd2" stroke-width="1.05" fill="none"/></svg><path d="M0.5 119.3v3.8M22.5 119.3v3.8M45.5 119.3v3.8M68.5 119.3v3.8M90.5 119.3v3.8M113.5 119.3v3.8M136.5 119.3v3.8M158.5 119.3v3.8M163.5 119.3v3.8M-1 117.5h-3.6M-1 98.5h-3.6M-1 78.5h-3.6M-1 58.5h-3.6M-1 39.5h-3.6M-1 19.5h-3.6M-1 0.5h-3.6" stroke="#2a2a2a" stroke-width="1" fill="none"/></svg>
<span class="t" style="left:289.51px;top:561px;font-size:10.4px;color:#0e0e0e;transform:scaleX(0.810);">-0.015</span>
<span class="t" style="left:294.2px;top:541px;font-size:10.4px;color:#0e0e0e;transform:scaleX(0.810);">-0.01</span>
<span class="t" style="left:289.51px;top:521px;font-size:10.4px;color:#0e0e0e;transform:scaleX(0.810);">-0.005</span>
<span class="t" style="left:308.71px;top:502px;font-size:10.4px;color:#0e0e0e;transform:scaleX(0.810);">0</span>
<span class="t" style="left:292.32px;top:482px;font-size:10.4px;color:#0e0e0e;transform:scaleX(0.810);">0.005</span>
<span class="t" style="left:297px;top:463px;font-size:10.4px;color:#0e0e0e;transform:scaleX(0.810);">0.01</span>
<span class="t" style="left:292.32px;top:443px;font-size:10.4px;color:#0e0e0e;transform:scaleX(0.810);">0.015</span>
<span class="t" style="left:317.86px;top:572px;font-size:10.4px;color:#0e0e0e;transform:scaleX(0.810);">0</span>
<span class="t" style="left:338.16px;top:572px;font-size:10.4px;color:#0e0e0e;transform:scaleX(0.810);">50</span>
<span class="t" style="left:358.46px;top:572px;font-size:10.4px;color:#0e0e0e;transform:scaleX(0.810);">100</span>
<span class="t" style="left:381.11px;top:572px;font-size:10.4px;color:#0e0e0e;transform:scaleX(0.810);">150</span>
<span class="t" style="left:403.76px;top:572px;font-size:10.4px;color:#0e0e0e;transform:scaleX(0.810);">200</span>
<span class="t" style="left:426.4px;top:572px;font-size:10.4px;color:#0e0e0e;transform:scaleX(0.810);">250</span>
<span class="t" style="left:449.05px;top:572px;font-size:10.4px;color:#0e0e0e;transform:scaleX(0.810);">300</span>
<span class="t" style="left:476.22px;top:572px;font-size:10.4px;color:#0e0e0e;transform:scaleX(0.810);">360</span>
<span class="t" style="left:250.65px;top:500.3px;font-size:9.4px;color:#0e0e0e;transform-origin:50% 50%;transform:rotate(-90deg) scaleX(1.037);">Amplitude [V]</span>
<span class="t" style="left:381.38px;top:586px;font-size:9.4px;color:#0e0e0e;transform:scaleX(0.980);">Phase [°]</span>
<svg class="a" style="left:304px;top:600px" width="188" height="134" viewBox="-8 -8 188 134"><rect x="0.4" y="-0.5" width="170.85" height="117.9" fill="#000"/><path d="M7.5 -0.5V117.4M14.5 -0.5V117.4M20.5 -0.5V117.4M27.5 -0.5V117.4M41.5 -0.5V117.4M48.5 -0.5V117.4M55.5 -0.5V117.4M61.5 -0.5V117.4M75.5 -0.5V117.4M82.5 -0.5V117.4M89.5 -0.5V117.4M96.5 -0.5V117.4M109.5 -0.5V117.4M116.5 -0.5V117.4M123.5 -0.5V117.4M130.5 -0.5V117.4M143.5 -0.5V117.4M150.5 -0.5V117.4M157.5 -0.5V117.4M164.5 -0.5V117.4M0.4 112.5H171.25M0.4 107.5H171.25M0.4 102.5H171.25M0.4 93.5H171.25M0.4 88.5H171.25M0.4 83.5H171.25M0.4 73.5H171.25M0.4 68.5H171.25M0.4 63.5H171.25M0.4 54.5H171.25M0.4 49.5H171.25M0.4 44.5H171.25M0.4 34.5H171.25M0.4 29.5H171.25M0.4 24.5H171.25M0.4 15.5H171.25M0.4 10.5H171.25M0.4 5.5H171.25" stroke="#3a3a00" stroke-width="1" fill="none"/><path d="M34.5 -0.5V117.4M68.5 -0.5V117.4M102.5 -0.5V117.4M137.5 -0.5V117.4M0.4 97.5H171.25M0.4 78.5H171.25M0.4 58.5H171.25M0.4 39.5H171.25M0.4 19.5H171.25" stroke="#6e6e00" stroke-width="1" fill="none"/><svg x="0.4" y="0.4" width="170.85" height="117" style="overflow:hidden"><path transform="scale(0.85) translate(0 .5)" stroke="#fff" stroke-width="1.27" fill="none" d="M109 1h2m20 0h2M109 2h2m5 0h2m13 0h2m2 0h2M116 3h2m17 0h2M109 6h2M97 7h2m10 0h2M97 8h2M81 9h2m45 0h2M81 10h2m36 0h2m1 0h2m4 0h2M119 11h5M100 12h2m6 0h2m2 0h2m7 0h2M94 13h2m4 0h2m6 0h2m2 0h2M71 14h2m21 0h2m8 0h2m2 0h2m10 0h2m6 0h2M71 15h2m20 0h2m6 0h2m1 0h2m2 0h4m3 0h2m3 0h2m6 0h2M67 16h2m12 0h3m9 0h2m3 0h2m1 0h2m2 0h4m1 0h2m1 0h4m7 0h2m2 0h2M67 17h2m7 0h2m3 0h5m6 0h4m2 0h4m3 0h4m1 0h2m1 0h2m1 0h3m5 0h2M76 18h2m6 0h4m4 0h4m4 0h8m1 0h3m4 0h3m4 0h2m1 0h2M64 19h2m3 0h2m4 0h2m2 0h2m5 0h5m1 0h2m2 0h3m2 0h5m3 0h2m3 0h2m1 0h8m1 0h2M62 20h4m3 0h4m2 0h2m2 0h2m6 0h4m2 0h8m3 0h9m1 0h2m1 0h9M62 21h7m2 0h3m1 0h3m4 0h2m3 0h2m4 0h4m1 0h23m3 0h2M65 22h6m1 0h2m2 0h2m4 0h4m3 0h2m3 0h2m3 0h22M60 23h2m4 0h5m2 0h7m4 0h3m1 0h3m3 0h29M59 24h3m1 0h17m4 0h39M53 25h2m3 0h3m2 0h17m4 0h2m1 0h35M51 26h4m1 0h5m2 0h11m2 0h4m2 0h41M51 27h2m3 0h19m2 0h3m2 0h3m1 0h37M53 28h4m1 0h23m2 0h37m1 0h2M47 29h2m4 0h67m1 0h2M47 30h2m5 0h66M47 31h73M47 32h68M48 33h67M46 34h63m1 0h2M40 35h4m2 0h59m2 0h2M40 36h61m6 0h2M40 37h56m1 0h2m1 0h3M39 38h58m3 0h3M39 39h51m4 0h3M32 40h2m3 0h53m4 0h3M32 41h2m2 0h54m5 0h2M34 42h43m1 0h3m1 0h3M30 43h2m2 0h46m5 0h2M30 44h2m2 0h41m1 0h2m7 0h2M29 45h46m1 0h4M29 46h41m2 0h3m1 0h4M29 47h41m3 0h2m14 0h2M29 48h36m1 0h3m20 0h2m2 0h2M30 49h38m25 0h2M26 50h2m2 0h36m1 0h2m11 0h2M25 51h3m1 0h40m9 0h4m8 0h4M18 52h2m5 0h36m1 0h2m1 0h3m10 0h2m6 0h2m2 0h5M18 53h2m6 0h35m1 0h2m2 0h2m18 0h2m2 0h5M27 54h34m2 0h2m21 0h2m1 0h2m1 0h2M23 55h2m1 0h28m2 0h2m1 0h2m2 0h2m24 0h2m1 0h2M23 56h2m1 0h27m29 0h3m1 0h2m3 0h3M24 57h2m1 0h28m20 0h2m5 0h3m1 0h8M24 58h25m1 0h5m3 0h2m15 0h2m4 0h2m3 0h8M25 59h2m1 0h21m9 0h2m7 0h2m4 0h2m6 0h3m2 0h8M28 60h12m1 0h5m2 0h2m17 0h2m1 0h2m1 0h2m1 0h2m1 0h5m1 0h5m1 0h3M33 61h13m2 0h2m20 0h2m4 0h2m1 0h2m3 0h5m2 0h2M23 62h2m14 0h2m7 0h2m13 0h2m9 0h2m7 0h11M23 63h2m14 0h2m3 0h2m2 0h2m13 0h2m8 0h3m3 0h2m2 0h8m1 0h2M28 64h4m7 0h2m3 0h2m27 0h2m3 0h3m1 0h3m2 0h2m3 0h2M28 65h4m46 0h2m2 0h3m4 0h5M75 66h5m9 0h5M75 67h3m4 0h5m1 0h6M7 68h2m62 0h6m5 0h5m1 0h4M7 69h2m59 0h2m1 0h7m3 0h5m1 0h5m1 0h2M55 70h4m9 0h2m1 0h9m1 0h10m2 0h2M55 71h4m9 0h2m1 0h3m1 0h16M65 72h2m5 0h7m1 0h7m1 0h6M61 73h2m2 0h3m3 0h15m1 0h7M61 74h2m3 0h2m2 0h3m1 0h2m1 0h17M63 75h9m1 0h8m1 0h7M63 76h9m1 0h21M68 77h19m1 0h6M68 78h8m2 0h13m1 0h3M68 79h2m2 0h7m1 0h15M67 80h3m4 0h5m2 0h8m1 0h5M67 81h6m2 0h4m2 0h10m1 0h3M66 82h7m1 0h20M66 83h2m1 0h7m2 0h3m1 0h12M70 84h5m3 0h16M65 85h4m1 0h5m1 0h14m2 0h2M64 86h5m1 0h20M64 87h2m2 0h4m3 0h18M68 88h5m2 0h2m2 0h15M71 89h2m2 0h16m1 0h2M69 90h6m2 0h14M69 91h3m1 0h2m1 0h2m2 0h2m1 0h8m1 0h2M68 92h4m1 0h2m1 0h2m1 0h9m1 0h5M68 93h2m6 0h9m1 0h2m1 0h4M73 94h2m1 0h3m2 0h5m1 0h4m2 0h2M73 95h2m6 0h5m1 0h5m1 0h2M81 96h4m5 0h2M75 97h2m1 0h2m2 0h3m2 0h2M75 98h2m1 0h2m2 0h2m3 0h2m1 0h2M87 99h2m1 0h2M78 100h2M78 101h2m13 0h2M93 102h2"/></svg><path d="M0.5 119v3.8M34.5 119v3.8M68.5 119v3.8M102.5 119v3.8M137.5 119v3.8M171.5 119v3.8M-0.8 117.5h-3.6M-0.8 97.5h-3.6M-0.8 78.5h-3.6M-0.8 58.5h-3.6M-0.8 39.5h-3.6M-0.8 19.5h-3.6M-0.8 0.5h-3.6" stroke="#2a2a2a" stroke-width="1" fill="none"/></svg>
<span class="t" style="left:290.88px;top:721px;font-size:10.4px;color:#0e0e0e;transform:scaleX(0.810);">-0.8</span>
<span class="t" style="left:290.88px;top:702px;font-size:10.4px;color:#0e0e0e;transform:scaleX(0.810);">-0.6</span>
<span class="t" style="left:290.88px;top:682px;font-size:10.4px;color:#0e0e0e;transform:scaleX(0.810);">-0.4</span>
<span class="t" style="left:290.88px;top:663px;font-size:10.4px;color:#0e0e0e;transform:scaleX(0.810);">-0.2</span>
<span class="t" style="left:300.71px;top:643px;font-size:10.4px;color:#0e0e0e;transform:scaleX(0.810);">0</span>
<span class="t" style="left:293.69px;top:624px;font-size:10.4px;color:#0e0e0e;transform:scaleX(0.810);">0.2</span>
<span class="t" style="left:293.69px;top:604px;font-size:10.4px;color:#0e0e0e;transform:scaleX(0.810);">0.4</span>
<span class="t" style="left:305.14px;top:733px;font-size:10.4px;color:#0e0e0e;transform:scaleX(0.810);">-0.5</span>
<span class="t" style="left:336.97px;top:733px;font-size:10.4px;color:#0e0e0e;transform:scaleX(0.810);">-0.25</span>
<span class="t" style="left:378.4px;top:733px;font-size:10.4px;color:#0e0e0e;transform:scaleX(0.810);">0</span>
<span class="t" style="left:406.71px;top:733px;font-size:10.4px;color:#0e0e0e;transform:scaleX(0.810);">0.25</span>
<span class="t" style="left:443.22px;top:733px;font-size:10.4px;color:#0e0e0e;transform:scaleX(0.810);">0.5</span>
<span class="t" style="left:475.05px;top:733px;font-size:10.4px;color:#0e0e0e;transform:scaleX(0.810);">0.75</span>
<span class="t" style="left:270.86px;top:661.3px;font-size:9.4px;color:#0e0e0e;transform-origin:50% 50%;transform:rotate(-90deg) scaleX(0.930);">PC2</span>
<span class="t" style="left:389.82px;top:746px;font-size:9.4px;color:#0e0e0e;transform:scaleX(0.875);">PC1</span>
<div class="a frame" style="left:511.7px;top:438.4px;width:238.6px;height:160.2px;"></div>
<div class="a frame" style="left:511.7px;top:599.4px;width:238.6px;height:159.6px;"></div>
<svg class="a" style="left:560px;top:439px" width="179" height="134" viewBox="-8 -8 179 134"><rect x="0.5" y="-0.5" width="162.2" height="118.2" fill="#000"/><path d="M5.5 -0.5V117.7M9.5 -0.5V117.7M14.5 -0.5V117.7M18.5 -0.5V117.7M27.5 -0.5V117.7M32.5 -0.5V117.7M36.5 -0.5V117.7M41.5 -0.5V117.7M50.5 -0.5V117.7M54.5 -0.5V117.7M59.5 -0.5V117.7M63.5 -0.5V117.7M72.5 -0.5V117.7M77.5 -0.5V117.7M81.5 -0.5V117.7M86.5 -0.5V117.7M95.5 -0.5V117.7M99.5 -0.5V117.7M104.5 -0.5V117.7M108.5 -0.5V117.7M117.5 -0.5V117.7M122.5 -0.5V117.7M126.5 -0.5V117.7M131.5 -0.5V117.7M140.5 -0.5V117.7M144.5 -0.5V117.7M149.5 -0.5V117.7M153.5 -0.5V117.7M0.5 113.5H162.7M0.5 109.5H162.7M0.5 105.5H162.7M0.5 102.5H162.7M0.5 94.5H162.7M0.5 90.5H162.7M0.5 86.5H162.7M0.5 82.5H162.7M0.5 74.5H162.7M0.5 70.5H162.7M0.5 66.5H162.7M0.5 62.5H162.7M0.5 55.5H162.7M0.5 51.5H162.7M0.5 47.5H162.7M0.5 43.5H162.7M0.5 35.5H162.7M0.5 31.5H162.7M0.5 27.5H162.7M0.5 23.5H162.7M0.5 15.5H162.7M0.5 12.5H162.7M0.5 8.5H162.7M0.5 4.5H162.7" stroke="#3a3a00" stroke-width="1" fill="none"/><path d="M23.5 -0.5V117.7M45.5 -0.5V117.7M68.5 -0.5V117.7M90.5 -0.5V117.7M113.5 -0.5V117.7M135.5 -0.5V117.7M158.5 -0.5V117.7M0.5 98.5H162.7M0.5 78.5H162.7M0.5 58.5H162.7M0.5 39.5H162.7M0.5 19.5H162.7" stroke="#6e6e00" stroke-width="1" fill="none"/><svg x="0.5" y="0.3" width="162.2" height="117.4" style="overflow:hidden"><path transform="scale(0.85) translate(0 .5)" stroke="#fa474c" stroke-width="1.27" fill="none" d="M20 29h2M20 30h2m15 0h2M26 31h2m9 0h2M26 32h2M26 33h4M19 34h2m3 0h2m1 0h3M19 35h2m2 0h3M22 36h5M22 37h6M22 38h6M20 39h10M20 40h10M20 41h10m16 0h2M20 42h11m15 0h2M20 43h13M20 44h14M19 45h15m6 0h2M19 46h16m5 0h2M19 47h17m6 0h2M18 48h19m5 0h2M15 49h23M15 50h25m5 0h2M17 51h23m5 0h2m92 0h2M16 52h24m3 0h2m2 0h2m5 0h3m4 0h2m76 0h4m11 0h2M16 53h26m1 0h2m2 0h3m3 0h10m76 0h5m1 0h2m3 0h2m1 0h5M15 54h27m5 0h3m3 0h11m76 0h4m1 0h2m3 0h8M15 55h13m1 0h13m2 0h2m1 0h3m1 0h3m2 0h5m1 0h2m79 0h4m3 0h5M15 56h2m1 0h4m3 0h2m11 0h4m2 0h2m5 0h5m3 0h2m82 0h2M20 57h2m32 0h2m83 0h2m5 0h2M139 58h2m5 0h2M37 78h2M33 79h2m2 0h2M33 80h4m21 0h2m1 0h2m93 0h2M35 81h2m11 0h2m8 0h5m77 0h4m1 0h3m4 0h2m2 0h2M29 82h2m9 0h2m3 0h6m1 0h3m5 0h4m48 0h2m15 0h2m9 0h8m4 0h2m3 0h2M29 83h2m6 0h2m1 0h2m3 0h3m1 0h7m1 0h3m1 0h3m46 0h13m2 0h11m4 0h8m9 0h2M29 84h2m6 0h2m7 0h2m1 0h4m1 0h2m1 0h3m1 0h2m47 0h26m3 0h8M29 85h2m27 0h2m50 0h26m3 0h8M110 86h26M112 87h23M113 88h21M113 89h21m1 0h2M114 90h19m2 0h2M115 91h18M116 92h16M117 93h14M117 94h6m1 0h7M119 95h4m1 0h7M119 96h11M120 97h12M121 98h11M121 99h10M121 100h10M121 101h6M123 102h4M123 103h4M123 104h3M124 105h2M127 109h2M127 110h2M134 113h2M134 114h2"/><path d="M0.0 58.7 1.8 55.7 3.6 52.7 5.4 49.8 7.2 46.8 9.0 44.0 10.8 41.2 12.6 38.5 14.4 35.9 16.2 33.4 18.0 31.0 19.8 28.8 21.6 26.7 23.4 24.8 25.2 23.0 27.0 21.4 28.8 20.0 30.6 18.8 32.4 17.8 34.2 16.9 36.0 16.3 37.8 15.9 39.6 15.7 41.5 15.7 43.3 15.9 45.1 16.3 46.9 16.9 48.7 17.8 50.5 18.8 52.3 20.0 54.1 21.4 55.9 23.0 57.7 24.8 59.5 26.7 61.3 28.8 63.1 31.0 64.9 33.4 66.7 35.9 68.5 38.5 70.3 41.2 72.1 44.0 73.9 46.8 75.7 49.8 77.5 52.7 79.3 55.7 81.1 58.7 82.9 61.7 84.7 64.7 86.5 67.6 88.3 70.6 90.1 73.4 91.9 76.2 93.7 78.9 95.5 81.5 97.3 84.0 99.1 86.4 100.9 88.6 102.7 90.7 104.5 92.6 106.3 94.4 108.1 96.0 109.9 97.4 111.7 98.6 113.5 99.6 115.3 100.5 117.1 101.1 118.9 101.5 120.7 101.7 122.6 101.7 124.4 101.5 126.2 101.1 128.0 100.5 129.8 99.6 131.6 98.6 133.4 97.4 135.2 96.0 137.0 94.4 138.8 92.6 140.6 90.7 142.4 88.6 144.2 86.4 146.0 84.0 147.8 81.5 149.6 78.9 151.4 76.2 153.2 73.4 155.0 70.6 156.8 67.6 158.6 64.7 160.4 61.7 162.2 58.7" stroke="#b84fd2" stroke-width="1.05" fill="none"/></svg><path d="M0.5 119.3v3.8M23.5 119.3v3.8M45.5 119.3v3.8M68.5 119.3v3.8M90.5 119.3v3.8M113.5 119.3v3.8M135.5 119.3v3.8M158.5 119.3v3.8M162.5 119.3v3.8M-0.7 117.5h-3.6M-0.7 98.5h-3.6M-0.7 78.5h-3.6M-0.7 58.5h-3.6M-0.7 39.5h-3.6M-0.7 19.5h-3.6M-0.7 0.5h-3.6" stroke="#2a2a2a" stroke-width="1" fill="none"/></svg>
<span class="t" style="left:537.81px;top:561px;font-size:10.4px;color:#0e0e0e;transform:scaleX(0.810);">-0.015</span>
<span class="t" style="left:542.5px;top:541px;font-size:10.4px;color:#0e0e0e;transform:scaleX(0.810);">-0.01</span>
<span class="t" style="left:537.81px;top:521px;font-size:10.4px;color:#0e0e0e;transform:scaleX(0.810);">-0.005</span>
<span class="t" style="left:557.01px;top:502px;font-size:10.4px;color:#0e0e0e;transform:scaleX(0.810);">0</span>
<span class="t" style="left:540.62px;top:482px;font-size:10.4px;color:#0e0e0e;transform:scaleX(0.810);">0.005</span>
<span class="t" style="left:545.3px;top:463px;font-size:10.4px;color:#0e0e0e;transform:scaleX(0.810);">0.01</span>
<span class="t" style="left:540.62px;top:443px;font-size:10.4px;color:#0e0e0e;transform:scaleX(0.810);">0.015</span>
<span class="t" style="left:566.16px;top:572px;font-size:10.4px;color:#0e0e0e;transform:scaleX(0.810);">0</span>
<span class="t" style="left:586.34px;top:572px;font-size:10.4px;color:#0e0e0e;transform:scaleX(0.810);">50</span>
<span class="t" style="left:606.53px;top:572px;font-size:10.4px;color:#0e0e0e;transform:scaleX(0.810);">100</span>
<span class="t" style="left:629.06px;top:572px;font-size:10.4px;color:#0e0e0e;transform:scaleX(0.810);">150</span>
<span class="t" style="left:651.58px;top:572px;font-size:10.4px;color:#0e0e0e;transform:scaleX(0.810);">200</span>
<span class="t" style="left:674.11px;top:572px;font-size:10.4px;color:#0e0e0e;transform:scaleX(0.810);">250</span>
<span class="t" style="left:696.64px;top:572px;font-size:10.4px;color:#0e0e0e;transform:scaleX(0.810);">300</span>
<span class="t" style="left:723.67px;top:572px;font-size:10.4px;color:#0e0e0e;transform:scaleX(0.810);">360</span>
<span class="t" style="left:498.95px;top:500.3px;font-size:9.4px;color:#0e0e0e;transform-origin:50% 50%;transform:rotate(-90deg) scaleX(1.037);">Amplitude [V]</span>
<span class="t" style="left:629.25px;top:586px;font-size:9.4px;color:#0e0e0e;transform:scaleX(0.980);">Phase [°]</span>
<svg class="a" style="left:552px;top:600px" width="187" height="134" viewBox="-8 -8 187 134"><rect x="0.4" y="-0.5" width="170.3" height="117.9" fill="#000"/><path d="M7.5 -0.5V117.4M14.5 -0.5V117.4M20.5 -0.5V117.4M27.5 -0.5V117.4M41.5 -0.5V117.4M48.5 -0.5V117.4M54.5 -0.5V117.4M61.5 -0.5V117.4M75.5 -0.5V117.4M82.5 -0.5V117.4M88.5 -0.5V117.4M95.5 -0.5V117.4M109.5 -0.5V117.4M116.5 -0.5V117.4M123.5 -0.5V117.4M129.5 -0.5V117.4M143.5 -0.5V117.4M150.5 -0.5V117.4M157.5 -0.5V117.4M163.5 -0.5V117.4M0.4 112.5H170.7M0.4 107.5H170.7M0.4 102.5H170.7M0.4 93.5H170.7M0.4 88.5H170.7M0.4 83.5H170.7M0.4 73.5H170.7M0.4 68.5H170.7M0.4 63.5H170.7M0.4 54.5H170.7M0.4 49.5H170.7M0.4 44.5H170.7M0.4 34.5H170.7M0.4 29.5H170.7M0.4 24.5H170.7M0.4 15.5H170.7M0.4 10.5H170.7M0.4 5.5H170.7" stroke="#3a3a00" stroke-width="1" fill="none"/><path d="M34.5 -0.5V117.4M68.5 -0.5V117.4M102.5 -0.5V117.4M136.5 -0.5V117.4M0.4 97.5H170.7M0.4 78.5H170.7M0.4 58.5H170.7M0.4 39.5H170.7M0.4 19.5H170.7" stroke="#6e6e00" stroke-width="1" fill="none"/><svg x="0.4" y="0.4" width="170.3" height="117" style="overflow:hidden"><path transform="scale(0.85) translate(0 .5)" stroke="#fa474c" stroke-width="1.27" fill="none" d="M162 18h2M162 19h2M143 22h2M142 23h3M138 24h2m2 0h2m22 0h2M137 25h3m26 0h2M137 26h2m17 0h2M122 27h2m10 0h2m7 0h2m11 0h2M120 28h4m10 0h2m7 0h2m12 0h2M120 29h2m35 0h2M130 30h2m1 0h2m6 0h2m11 0h2M115 31h4m11 0h2m1 0h2m6 0h2m11 0h2M115 32h4m6 0h2m3 0h2m1 0h5m5 0h2M115 33h4m6 0h7m1 0h5m2 0h6m3 0h2M105 34h2m2 0h2m6 0h5m1 0h10m1 0h2m4 0h8m1 0h2M105 35h2m2 0h2m7 0h4m1 0h3m1 0h2m2 0h2m1 0h3m1 0h2m1 0h2m2 0h3m1 0h2m9 0h2M107 36h2m6 0h2m2 0h6m2 0h3m3 0h8m4 0h6m3 0h2m4 0h3M107 37h2m6 0h4m3 0h5m1 0h14m1 0h8m3 0h2m5 0h2M111 38h3m3 0h2m1 0h7m1 0h22M111 39h3m1 0h4m1 0h8m1 0h18m1 0h4m4 0h3M112 40h5m5 0h8m1 0h4m1 0h2m2 0h5m4 0h5m2 0h3m1 0h2M107 41h2m1 0h7m1 0h2m1 0h3m1 0h5m1 0h2m1 0h13m2 0h5m4 0h4M106 42h17m1 0h9m1 0h19m5 0h2M104 43h4m1 0h2m1 0h2m1 0h4m1 0h31m4 0h5M104 44h7m4 0h2m3 0h29m5 0h4M99 45h2m4 0h7m2 0h5m1 0h29m1 0h3m1 0h8M99 46h3m4 0h17m2 0h37M94 47h2m3 0h3m4 0h2m3 0h17m1 0h11m2 0h4m1 0h10M94 48h2m3 0h14m1 0h35m1 0h7m1 0h2m1 0h2M97 49h2m1 0h14m1 0h45m1 0h2M93 50h2m2 0h3m8 0h12m1 0h34m1 0h2M93 51h2m1 0h4m3 0h2m1 0h2m3 0h43M94 52h4m5 0h2m1 0h2m3 0h46m1 0h2M94 53h3m5 0h2m4 0h8m1 0h24m1 0h15m1 0h2m1 0h2M95 54h3m4 0h2m4 0h8m2 0h34m6 0h2m1 0h2M94 55h4m1 0h2m1 0h5m2 0h40m5 0h2m2 0h2M94 56h2m3 0h2m1 0h5m1 0h23m1 0h17m5 0h3m1 0h2M94 57h4m1 0h2m2 0h3m1 0h3m3 0h10m1 0h18m1 0h7m1 0h6m1 0h2M94 58h10m3 0h3m1 0h36m1 0h2m1 0h4m2 0h2M94 59h5m2 0h3m6 0h12m1 0h7m1 0h9m2 0h2m1 0h5m1 0h5m1 0h2M94 60h9m3 0h2m2 0h9m6 0h10m3 0h2m1 0h3m3 0h2m3 0h4M95 61h9m2 0h2m1 0h8m2 0h3m3 0h2m1 0h15m6 0h2M93 62h2m1 0h8m2 0h6m2 0h8m3 0h7m2 0h12m2 0h3M93 63h6m1 0h4m1 0h7m2 0h2m1 0h2m1 0h2m5 0h2m1 0h2m2 0h12m2 0h5M94 64h5m1 0h2m1 0h4m2 0h3m7 0h2m6 0h7m2 0h2m3 0h2m6 0h4M94 65h8m1 0h2m2 0h8m2 0h5m2 0h11m1 0h2m3 0h6m2 0h3M93 66h2m3 0h4m1 0h2m2 0h2m1 0h5m2 0h18m2 0h2m4 0h4M93 67h2m2 0h4m2 0h2m2 0h2m10 0h10m2 0h2m3 0h5M97 68h2m2 0h2m4 0h4m9 0h5m9 0h4m1 0h2M96 69h4m1 0h2m6 0h4m9 0h3m3 0h4m2 0h3m3 0h2M95 70h5m1 0h2m8 0h2m9 0h2m2 0h6m3 0h2m3 0h2M95 71h8m2 0h2m19 0h2m2 0h2m1 0h5m7 0h2M95 72h4m1 0h3m2 0h3m25 0h5m7 0h2M95 73h6m1 0h2m1 0h3m21 0h2m4 0h2M94 74h2m2 0h3m1 0h2m1 0h2m22 0h3m3 0h2M93 75h4m1 0h3m1 0h2m5 0h2m14 0h2m3 0h2m3 0h2M93 76h4m2 0h5m3 0h4m14 0h2M93 77h13m1 0h2M93 78h3m1 0h6m1 0h3M93 79h3m1 0h3m1 0h3m1 0h2M93 80h12M93 81h12M93 82h6m1 0h2m3 0h2M93 83h11m1 0h4M93 84h2m1 0h4m2 0h4m1 0h2M93 85h2m1 0h7m1 0h2M96 86h7m1 0h4M94 87h6m4 0h4M94 88h4m2 0h2M96 89h3m1 0h2M94 90h5m38 0h2m14 0h2M94 91h3m40 0h2m14 0h2M93 92h2m3 0h2m53 0h2M93 93h7m1 0h2m50 0h2M93 94h7m1 0h2M94 95h2m2 0h4M94 96h2m4 0h2M98 97h2M96 98h4M94 99h5M94 100h2M106 105h2M106 106h2M146 108h4M146 109h4M166 116h3M166 117h3"/></svg><path d="M0.5 119v3.8M34.5 119v3.8M68.5 119v3.8M102.5 119v3.8M136.5 119v3.8M170.5 119v3.8M-0.8 117.5h-3.6M-0.8 97.5h-3.6M-0.8 78.5h-3.6M-0.8 58.5h-3.6M-0.8 39.5h-3.6M-0.8 19.5h-3.6M-0.8 0.5h-3.6" stroke="#2a2a2a" stroke-width="1" fill="none"/></svg>
<span class="t" style="left:538.88px;top:721px;font-size:10.4px;color:#0e0e0e;transform:scaleX(0.810);">-0.8</span>
<span class="t" style="left:538.88px;top:702px;font-size:10.4px;color:#0e0e0e;transform:scaleX(0.810);">-0.6</span>
<span class="t" style="left:538.88px;top:682px;font-size:10.4px;color:#0e0e0e;transform:scaleX(0.810);">-0.4</span>
<span class="t" style="left:538.88px;top:663px;font-size:10.4px;color:#0e0e0e;transform:scaleX(0.810);">-0.2</span>
<span class="t" style="left:548.71px;top:643px;font-size:10.4px;color:#0e0e0e;transform:scaleX(0.810);">0</span>
<span class="t" style="left:541.69px;top:624px;font-size:10.4px;color:#0e0e0e;transform:scaleX(0.810);">0.2</span>
<span class="t" style="left:541.69px;top:604px;font-size:10.4px;color:#0e0e0e;transform:scaleX(0.810);">0.4</span>
<span class="t" style="left:553.14px;top:733px;font-size:10.4px;color:#0e0e0e;transform:scaleX(0.810);">-0.5</span>
<span class="t" style="left:584.86px;top:733px;font-size:10.4px;color:#0e0e0e;transform:scaleX(0.810);">-0.25</span>
<span class="t" style="left:626.18px;top:733px;font-size:10.4px;color:#0e0e0e;transform:scaleX(0.810);">0</span>
<span class="t" style="left:654.38px;top:733px;font-size:10.4px;color:#0e0e0e;transform:scaleX(0.810);">0.25</span>
<span class="t" style="left:690.78px;top:733px;font-size:10.4px;color:#0e0e0e;transform:scaleX(0.810);">0.5</span>
<span class="t" style="left:722.5px;top:733px;font-size:10.4px;color:#0e0e0e;transform:scaleX(0.810);">0.75</span>
<span class="t" style="left:518.86px;top:661.3px;font-size:9.4px;color:#0e0e0e;transform-origin:50% 50%;transform:rotate(-90deg) scaleX(0.930);">PC2</span>
<span class="t" style="left:637.55px;top:746px;font-size:9.4px;color:#0e0e0e;transform:scaleX(0.875);">PC1</span>
<div class="a" style="left:29.8px;top:767.2px;width:209.9px;height:38.8px;border:1.4px solid #d4d4d4;border-right-color:#8a8a8a;border-bottom-color:#8a8a8a;box-shadow:inset 1.3px 1.3px 0 #8a8a8a,inset -1.3px -1.3px 0 #d4d4d4;"></div>
<div class="a btn" style="left:36.2px;top:772.8px;width:84.8px;height:28.2px;"></div>
<span class="t" style="left:50.2px;top:783px;font-size:10.6px;color:#111;font-weight:bold;transform:scaleX(0.964);">SAVE DATA</span>
<span class="t" style="left:150.4px;top:775px;font-size:10.3px;color:#0a0a0a;font-weight:bold;transform:scaleX(0.963);">Save notes</span>
<span class="t" style="left:150.4px;top:788px;font-size:10.3px;color:#0a0a0a;font-weight:bold;transform:scaleX(0.978);">with data?</span>
<div class="a" style="left:209.3px;top:775.5px;width:23.2px;height:22.9px;background:radial-gradient(circle at 26% 26%,#c8ffb0 0,#74ff30 22%,#56f412 50%,#34cc04 100%);border:1.6px solid #a39ca3;border-right-color:#d2d2d2;border-bottom-color:#d2d2d2;"></div>
<div class="a btndis" style="left:83px;top:811px;width:105px;height:24px;"></div>
<span class="t" style="left:93.1px;top:821px;font-size:9.8px;color:#808080;font-weight:bold;transform:scaleX(0.870);">GENERATE REPORT</span>
<span class="t" style="left:346.2px;top:769px;font-size:11.4px;color:#111;font-weight:bold;transform:scaleX(0.972);">PD</span>
<div class="a" style="left:367.5px;top:767.5px;width:13.6px;height:13.6px;border-radius:50%;background:linear-gradient(135deg,#949494 0,#aaaaaa 38%,#dcdcdc 62%,#ffffff 88%);"></div>
<div class="a" style="left:369.1px;top:768.9px;width:10.3px;height:10.3px;border-radius:50%;background:radial-gradient(circle at 36% 30%,#6c8a5c 0,#2f4f22 38%,#223c18 100%);"></div>
<span class="t" style="left:322.4px;top:788px;font-size:11.4px;color:#111;font-weight:bold;transform:scaleX(0.982);">Corona</span>
<div class="a" style="left:367.5px;top:786.6px;width:13.6px;height:13.6px;border-radius:50%;background:linear-gradient(135deg,#949494 0,#aaaaaa 38%,#dcdcdc 62%,#ffffff 88%);"></div>
<div class="a" style="left:369.1px;top:788px;width:10.3px;height:10.3px;border-radius:50%;background:radial-gradient(circle at 36% 30%,#6c8a5c 0,#2f4f22 38%,#223c18 100%);"></div>
<span class="t" style="left:330.2px;top:807px;font-size:11.4px;color:#111;font-weight:bold;transform:scaleX(1.011);">Noise</span>
<div class="a" style="left:367.5px;top:805.7px;width:13.6px;height:13.6px;border-radius:50%;background:linear-gradient(135deg,#949494 0,#aaaaaa 38%,#dcdcdc 62%,#ffffff 88%);"></div>
<div class="a" style="left:369.1px;top:807.1px;width:10.3px;height:10.3px;border-radius:50%;background:radial-gradient(circle at 38% 32%,#c0ff8c 0,#62f422 40%,#3cd20a 100%);"></div>
<span class="t" style="left:269px;top:826px;font-size:11.4px;color:#111;font-weight:bold;transform:scaleX(1.044);">Insufficient Data</span>
<div class="a" style="left:367.5px;top:824.8px;width:13.6px;height:13.6px;border-radius:50%;background:linear-gradient(135deg,#949494 0,#aaaaaa 38%,#dcdcdc 62%,#ffffff 88%);"></div>
<div class="a" style="left:369.1px;top:826.2px;width:10.3px;height:10.3px;border-radius:50%;background:radial-gradient(circle at 36% 30%,#6c8a5c 0,#2f4f22 38%,#223c18 100%);"></div>
<div class="a" style="left:433.7px;top:784.4px;width:58.8px;height:44px;background:#a9a9a9;border-top:1px solid #8c8c8c;border-left:1px solid #909090;border-right:1px solid #c8c8c8;border-bottom:1px solid #d0d0d0;"></div>
<span class="t" style="left:407px;top:788px;font-size:10.8px;color:#111;font-weight:bold;transform:scaleX(0.991);">Surf</span>
<div class="a" style="left:437px;top:786.9px;width:53.2px;height:11.9px;background:#fff;"></div>
<span class="t" style="left:461.3px;top:790px;font-size:9px;color:#222;transform:scaleX(0.879);">0</span>
<span class="t" style="left:415px;top:802px;font-size:10.8px;color:#111;font-weight:bold;transform:scaleX(1.016);">Int</span>
<div class="a" style="left:437px;top:800.5px;width:53.2px;height:11.9px;background:#fff;"></div>
<span class="t" style="left:461.3px;top:803px;font-size:9px;color:#222;transform:scaleX(0.879);">0</span>
<span class="t" style="left:390.4px;top:816px;font-size:10.8px;color:#111;font-weight:bold;transform:scaleX(1.005);">Corona</span>
<div class="a" style="left:437px;top:814.1px;width:53.2px;height:11.9px;background:#fff;"></div>
<span class="t" style="left:461.3px;top:817px;font-size:9px;color:#222;transform:scaleX(0.879);">0</span>
<span class="t" style="left:592.8px;top:769px;font-size:11.4px;color:#111;font-weight:bold;transform:scaleX(0.972);">PD</span>
<div class="a" style="left:614.5px;top:767.5px;width:13.6px;height:13.6px;border-radius:50%;background:linear-gradient(135deg,#949494 0,#aaaaaa 38%,#dcdcdc 62%,#ffffff 88%);"></div>
<div class="a" style="left:616.1px;top:768.9px;width:10.3px;height:10.3px;border-radius:50%;background:radial-gradient(circle at 38% 32%,#c0ff8c 0,#62f422 40%,#3cd20a 100%);"></div>
<span class="t" style="left:569px;top:788px;font-size:11.4px;color:#111;font-weight:bold;transform:scaleX(0.982);">Corona</span>
<div class="a" style="left:614.5px;top:786.6px;width:13.6px;height:13.6px;border-radius:50%;background:linear-gradient(135deg,#949494 0,#aaaaaa 38%,#dcdcdc 62%,#ffffff 88%);"></div>
<div class="a" style="left:616.1px;top:788px;width:10.3px;height:10.3px;border-radius:50%;background:radial-gradient(circle at 36% 30%,#6c8a5c 0,#2f4f22 38%,#223c18 100%);"></div>
<span class="t" style="left:576.8px;top:807px;font-size:11.4px;color:#111;font-weight:bold;transform:scaleX(1.011);">Noise</span>
<div class="a" style="left:614.5px;top:805.7px;width:13.6px;height:13.6px;border-radius:50%;background:linear-gradient(135deg,#949494 0,#aaaaaa 38%,#dcdcdc 62%,#ffffff 88%);"></div>
<div class="a" style="left:616.1px;top:807.1px;width:10.3px;height:10.3px;border-radius:50%;background:radial-gradient(circle at 36% 30%,#6c8a5c 0,#2f4f22 38%,#223c18 100%);"></div>
<span class="t" style="left:515.6px;top:826px;font-size:11.4px;color:#111;font-weight:bold;transform:scaleX(1.044);">Insufficient Data</span>
<div class="a" style="left:614.5px;top:824.8px;width:13.6px;height:13.6px;border-radius:50%;background:linear-gradient(135deg,#949494 0,#aaaaaa 38%,#dcdcdc 62%,#ffffff 88%);"></div>
<div class="a" style="left:616.1px;top:826.2px;width:10.3px;height:10.3px;border-radius:50%;background:radial-gradient(circle at 36% 30%,#6c8a5c 0,#2f4f22 38%,#223c18 100%);"></div>
<div class="a" style="left:681.9px;top:784.4px;width:58.4px;height:44px;background:#a9a9a9;border-top:1px solid #8c8c8c;border-left:1px solid #909090;border-right:1px solid #c8c8c8;border-bottom:1px solid #d0d0d0;"></div>
<span class="t" style="left:655.4px;top:788px;font-size:10.8px;color:#111;font-weight:bold;transform:scaleX(0.991);">Surf</span>
<div class="a" style="left:685.2px;top:786.9px;width:52.8px;height:11.9px;background:#fff;"></div>
<span class="t" style="left:709.3px;top:790px;font-size:9px;color:#222;transform:scaleX(0.879);">1</span>
<span class="t" style="left:663.4px;top:802px;font-size:10.8px;color:#111;font-weight:bold;transform:scaleX(1.016);">Int</span>
<div class="a" style="left:685.2px;top:800.5px;width:52.8px;height:11.9px;background:#fff;"></div>
<span class="t" style="left:709.3px;top:803px;font-size:9px;color:#222;transform:scaleX(0.879);">0</span>
<span class="t" style="left:638.8px;top:816px;font-size:10.8px;color:#111;font-weight:bold;transform:scaleX(1.005);">Corona</span>
<div class="a" style="left:685.2px;top:814.1px;width:52.8px;height:11.9px;background:#fff;"></div>
<span class="t" style="left:709.3px;top:817px;font-size:9px;color:#222;transform:scaleX(0.879);">0</span>
<div class="a" style="left:0px;top:830.75px;width:1533px;height:8px;background:#fff;"></div>
<div class="a" style="left:0px;top:831.9px;width:1530px;height:1.1px;background:#727272;"></div>
<div class="a" style="left:0px;top:830.75px;width:0.8px;height:2px;background:#727272;"></div>
<div class="a" style="left:1529px;top:830px;width:1px;height:2.5px;background:#727272;"></div>
<div class="a" style="left:1530px;top:0px;width:3px;height:838px;background:#fff;"></div>
</body></html>
